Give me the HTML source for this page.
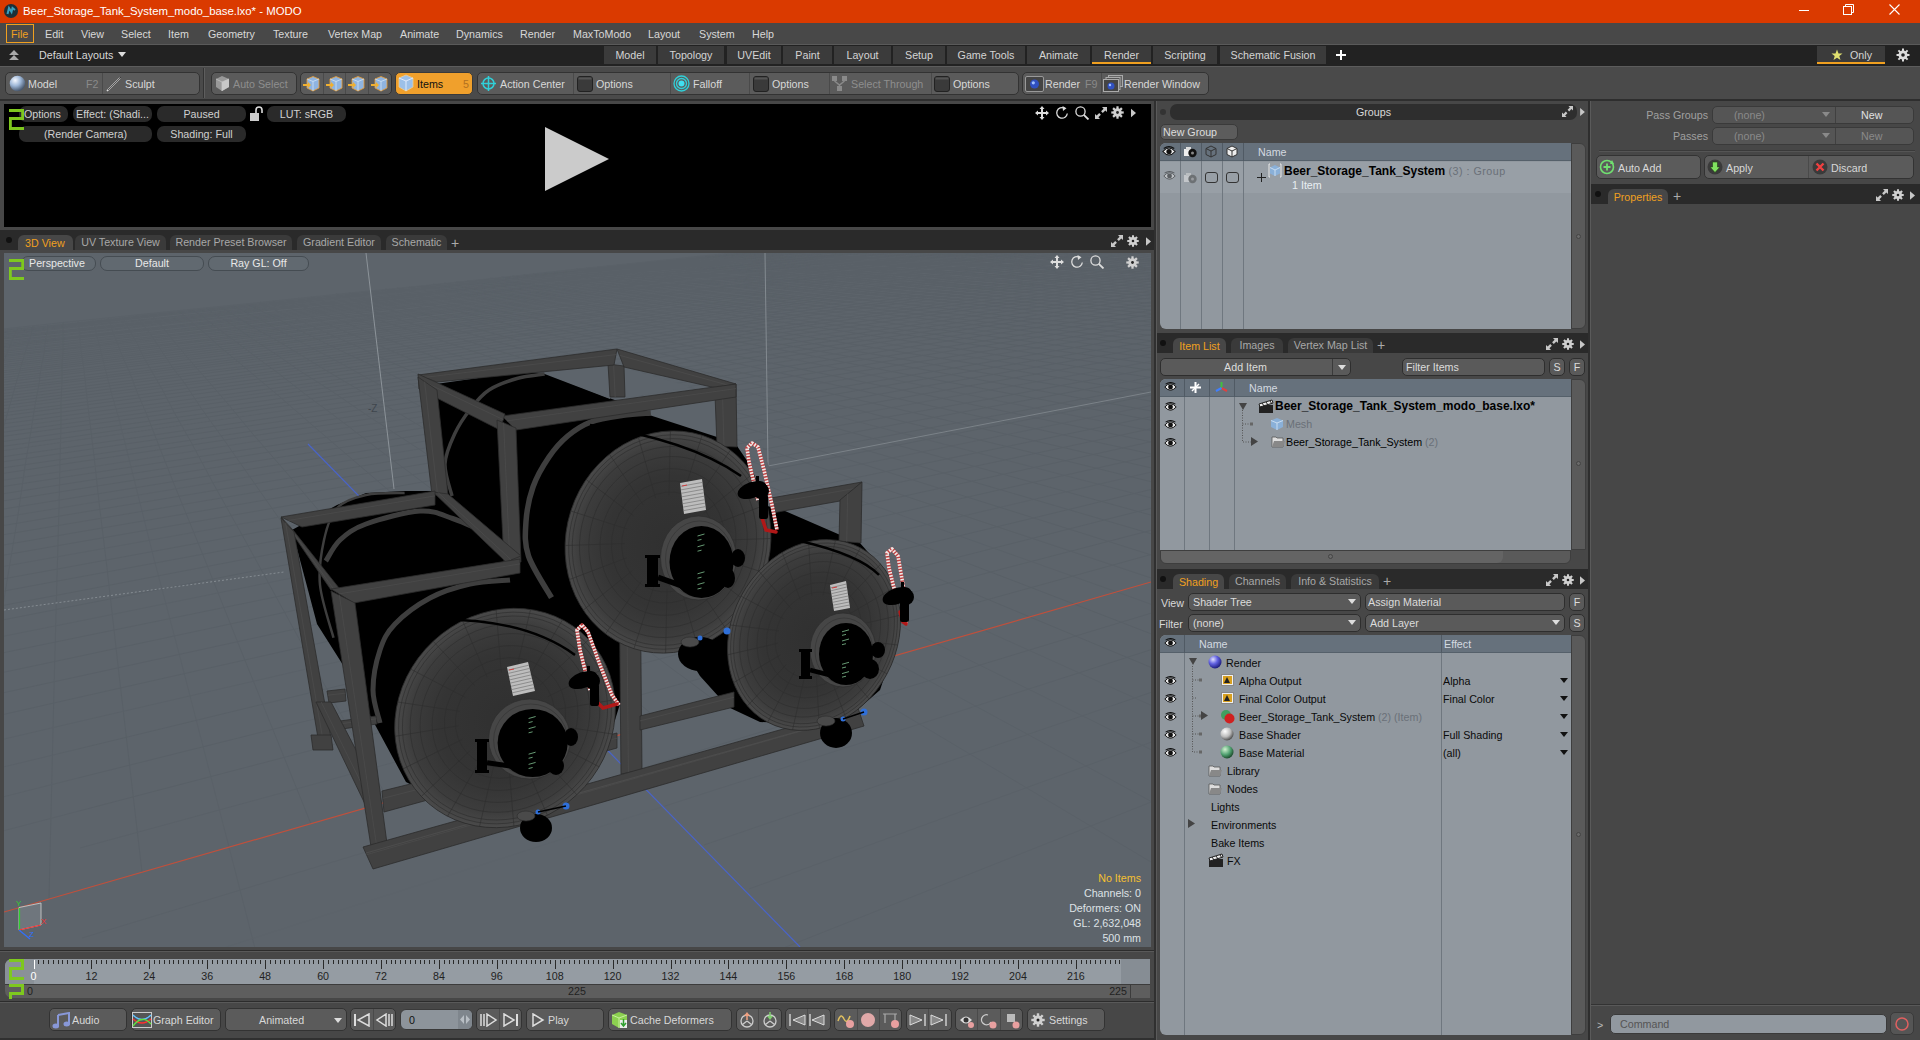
<!DOCTYPE html>
<html><head><meta charset="utf-8">
<style>
*{box-sizing:border-box;margin:0;padding:0}
html,body{width:1920px;height:1040px;overflow:hidden;background:#3a3a3a;font-family:"Liberation Sans",sans-serif;font-size:10.7px;color:#d8d8d8}
.a{position:absolute}
.t{position:absolute;white-space:nowrap;line-height:1}
.btn{position:absolute;background:#5b5b5b;border:1px solid #333;border-radius:5px}
.pill{position:absolute;background:#2a2a2a;border-radius:7px;color:#d0d0d0;text-align:center;line-height:16px;height:16px;white-space:nowrap}
.vpill{position:absolute;border:1px solid #454c52;border-radius:7px;color:#e8e8e8;text-align:center;line-height:13px;height:15px;white-space:nowrap;background:#616970}
.tab{position:absolute;background:#3b3b3b;color:#d4d4d4;text-align:center;line-height:18px;height:18px;white-space:nowrap}
.ptab{position:absolute;background:#3a3a3a;border-radius:6px 6px 0 0;color:#a8a8a8;line-height:15px;height:15px;white-space:nowrap;text-align:center}
.list{position:absolute;background:#91989f}
.hdr{position:absolute;background:#66717c;color:#d0d6dc}
.vl{position:absolute;width:1px;background:#6f777f}
.dd{position:absolute;background:#5a5a5a;border:1px solid #2e2e2e;border-radius:5px;color:#dcdcdc;line-height:15px;white-space:nowrap}
</style></head><body>
<!-- TITLE BAR -->
<div class="a" style="left:0;top:0;width:1920px;height:23px;background:#da3a00"></div>
<svg class="a" style="left:3px;top:3px" width="16" height="16"><circle cx="8" cy="8" r="7" fill="#1d3038"/><path d="M4.5 11 L6 5 L8.5 9 L9.5 5 L12 7" stroke="#3aa0c0" stroke-width="2" fill="none"/></svg>
<div class="t" style="left:23px;top:6px;font-size:11.4px;color:#fff">Beer_Storage_Tank_System_modo_base.lxo* - MODO</div>
<div class="a" style="left:1799px;top:10px;width:10px;height:1px;background:#fff"></div>
<svg class="a" style="left:1843px;top:4px" width="12" height="12"><rect x="0.5" y="2.5" width="8" height="8" fill="none" stroke="#fff"/><path d="M2.5 2.5 V0.5 H10.5 V8.5 H8.5" fill="none" stroke="#fff"/></svg>
<svg class="a" style="left:1889px;top:4px" width="12" height="12"><path d="M0.5 0.5 L10.5 10.5 M10.5 0.5 L0.5 10.5" stroke="#fff" stroke-width="1.1"/></svg>

<!-- MENU BAR -->
<div class="a" style="left:0;top:23px;width:1920px;height:22px;background:#484848;border-bottom:1px solid #5a5a5a"></div>
<div class="a" style="left:6px;top:24px;width:28px;height:19px;border:1px solid #f0a020"></div>
<div class="t" style="left:11px;top:29px;color:#f0a020">File</div>
<div class="t" style="left:45px;top:29px">Edit</div>
<div class="t" style="left:81px;top:29px">View</div>
<div class="t" style="left:121px;top:29px">Select</div>
<div class="t" style="left:168px;top:29px">Item</div>
<div class="t" style="left:208px;top:29px">Geometry</div>
<div class="t" style="left:273px;top:29px">Texture</div>
<div class="t" style="left:328px;top:29px">Vertex Map</div>
<div class="t" style="left:400px;top:29px">Animate</div>
<div class="t" style="left:456px;top:29px">Dynamics</div>
<div class="t" style="left:520px;top:29px">Render</div>
<div class="t" style="left:573px;top:29px">MaxToModo</div>
<div class="t" style="left:648px;top:29px">Layout</div>
<div class="t" style="left:699px;top:29px">System</div>
<div class="t" style="left:752px;top:29px">Help</div>

<!-- LAYOUT BAR -->
<div class="a" style="left:0;top:45px;width:1920px;height:21px;background:#222"></div>
<svg class="a" style="left:8px;top:49px" width="12" height="12"><path d="M1 6 L6 1 L11 6 Z M1 11 L6 6 L11 11 Z" fill="#aaa"/></svg>
<div class="t" style="left:39px;top:50px">Default Layouts</div>
<svg class="a" style="left:118px;top:52px" width="8" height="5"><path d="M0 0 H8 L4 5Z" fill="#ddd"/></svg>
<div class="tab" style="left:604px;top:46px;width:52px">Model</div>
<div class="tab" style="left:658px;top:46px;width:66px">Topology</div>
<div class="tab" style="left:727px;top:46px;width:54px">UVEdit</div>
<div class="tab" style="left:783px;top:46px;width:49px">Paint</div>
<div class="tab" style="left:834px;top:46px;width:57px">Layout</div>
<div class="tab" style="left:893px;top:46px;width:52px">Setup</div>
<div class="tab" style="left:947px;top:46px;width:78px">Game Tools</div>
<div class="tab" style="left:1027px;top:46px;width:63px">Animate</div>
<div class="tab" style="left:1092px;top:46px;width:59px;box-shadow:inset 0 -2px 0 #f0a020">Render</div>
<div class="tab" style="left:1153px;top:46px;width:64px">Scripting</div>
<div class="tab" style="left:1220px;top:46px;width:106px">Schematic Fusion</div>
<svg class="a" style="left:1335px;top:49px" width="12" height="12"><path d="M6 1 V11 M1 6 H11" stroke="#fff" stroke-width="2"/></svg>
<div class="tab" style="left:1817px;top:46px;width:68px;box-shadow:inset 0 -2px 0 #f0a020;text-align:left;padding-left:33px">Only</div>
<svg class="a" style="left:1831px;top:49px" width="12" height="12"><path d="M6 0.5 L7.5 4.5 L11.5 4.6 L8.3 7.1 L9.5 11 L6 8.7 L2.5 11 L3.7 7.1 L0.5 4.6 L4.5 4.5Z" fill="#e0e070"/></svg>
<svg class="a" style="left:1896px;top:48px" width="14" height="14" viewBox="0 0 14 14"><g fill="#ddd"><circle cx="7" cy="7" r="4.5"/><rect x="6" y="0.5" width="2" height="13"/><rect x="0.5" y="6" width="13" height="2"/><rect x="6" y="0.5" width="2" height="13" transform="rotate(45 7 7)"/><rect x="6" y="0.5" width="2" height="13" transform="rotate(-45 7 7)"/></g><circle cx="7" cy="7" r="1.8" fill="#222"/></svg>
<!-- TOOLBAR -->
<div class="a" style="left:0;top:66px;width:1920px;height:35px;background:#4a4a4a;border-top:1px solid #5c5c5c;border-bottom:2px solid #2e2e2e"></div>
<div class="a" style="left:203px;top:68px;width:1px;height:30px;background:#333"></div>
<div class="a" style="left:204px;top:68px;width:1px;height:30px;background:#5e5e5e"></div>
<!-- model/sculpt -->
<div class="btn" style="left:5px;top:72px;width:195px;height:23px"></div>
<div class="a" style="left:102px;top:73px;width:1px;height:21px;background:#4a4a4a"></div>
<svg class="a" style="left:9px;top:75px" width="17" height="17"><defs><radialGradient id="gs" cx="0.35" cy="0.3" r="0.7"><stop offset="0" stop-color="#f4f8ff"/><stop offset="0.5" stop-color="#9fb8d8"/><stop offset="1" stop-color="#4a5a70"/></radialGradient></defs><circle cx="8.5" cy="8.5" r="7.8" fill="url(#gs)"/></svg>
<div class="t" style="left:28px;top:79px">Model</div>
<div class="t" style="left:86px;top:79px;color:#8a8a8a">F2</div>
<svg class="a" style="left:105px;top:75px" width="18" height="18"><path d="M2 16 L15 3" stroke="#ddd" stroke-width="1.6"/><path d="M3 15 L16 2" stroke="#333" stroke-width="0.8"/></svg>
<div class="t" style="left:125px;top:79px">Sculpt</div>
<!-- auto select -->
<div class="btn" style="left:211px;top:72px;width:86px;height:23px"></div>
<svg class="a" style="left:214px;top:75px" width="17" height="17"><path d="M2 4 L8 1 L15 4 L15 12 L8 16 L2 12Z" fill="#999"/><path d="M2 4 L8 7 L15 4 M8 7 V16" stroke="#bbb" fill="none"/><path d="M8 7 L15 4 L15 12 L8 16Z" fill="#c8c8c8"/></svg>
<div class="t" style="left:233px;top:79px;color:#8e8e8e">Auto Select</div>
<!-- 4 icons -->
<div class="btn" style="left:300px;top:72px;width:92px;height:23px"></div>
<div class="a" style="left:323px;top:73px;width:1px;height:21px;background:#4a4a4a"></div>
<div class="a" style="left:345px;top:73px;width:1px;height:21px;background:#4a4a4a"></div>
<div class="a" style="left:368px;top:73px;width:1px;height:21px;background:#4a4a4a"></div>
<svg class="a" style="left:302px;top:75px" width="90" height="18">
 <g id="cb"><path d="M5 4 L11 1.5 L17 4 L17 13 L11 16 L5 13Z" fill="#8fb4e0" stroke="#f0a030" stroke-width="0.8"/><path d="M5 4 L11 6.5 L17 4 M11 6.5 V16" stroke="#d8e8f8" stroke-width="0.7" fill="none"/><path d="M1 9 H6 V7 L9 10 L6 13 V11 H1Z" fill="#f0b030"/></g>
 <use href="#cb" x="23"/><use href="#cb" x="45"/><use href="#cb" x="68"/>
</svg>
<!-- items -->
<div class="a" style="left:395px;top:72px;width:78px;height:23px;background:#f0a02c;border-radius:5px;border:1px solid #3a3a3a"></div>
<svg class="a" style="left:397px;top:74px" width="18" height="18"><path d="M2 4 L9 1 L16 4 L16 13 L9 17 L2 13Z" fill="#9cc0e8" stroke="#e8d0a0" stroke-width="0.8"/><path d="M2 4 L9 7 L16 4 M9 7 V17" stroke="#f0f4ff" stroke-width="0.8" fill="none"/></svg>
<div class="t" style="left:417px;top:79px;color:#111">Items</div>
<div class="t" style="left:463px;top:79px;color:#b07020">5</div>
<!-- action center group -->
<div class="btn" style="left:477px;top:72px;width:542px;height:23px"></div>
<div class="a" style="left:573px;top:73px;width:1px;height:21px;background:#4a4a4a"></div>
<div class="a" style="left:670px;top:73px;width:1px;height:21px;background:#4a4a4a"></div>
<div class="a" style="left:749px;top:73px;width:1px;height:21px;background:#4a4a4a"></div>
<div class="a" style="left:829px;top:73px;width:1px;height:21px;background:#4a4a4a"></div>
<div class="a" style="left:931px;top:73px;width:1px;height:21px;background:#4a4a4a"></div>
<svg class="a" style="left:480px;top:75px" width="17" height="17"><circle cx="8.5" cy="8.5" r="5.5" stroke="#30d0d8" stroke-width="1.5" fill="none"/><path d="M8.5 1 V16 M1 8.5 H16" stroke="#30d0d8" stroke-width="1.5"/></svg>
<div class="t" style="left:500px;top:79px">Action Center</div>
<svg class="a" style="left:577px;top:76px" width="16" height="16"><rect x="0.5" y="0.5" width="15" height="15" rx="2.5" fill="#3a3a3a" stroke="#222"/><rect x="1.5" y="1.5" width="13" height="2" fill="#555"/></svg>
<div class="t" style="left:596px;top:79px">Options</div>
<svg class="a" style="left:673px;top:75px" width="17" height="17"><circle cx="8.5" cy="8.5" r="7.5" stroke="#30d0d8" stroke-width="1.3" fill="none"/><circle cx="8.5" cy="8.5" r="5" stroke="#30d0d8" stroke-width="1.3" fill="none"/><circle cx="8.5" cy="8.5" r="3" fill="#40e0f0"/></svg>
<div class="t" style="left:693px;top:79px">Falloff</div>
<svg class="a" style="left:753px;top:76px" width="16" height="16"><rect x="0.5" y="0.5" width="15" height="15" rx="2.5" fill="#3a3a3a" stroke="#222"/><rect x="1.5" y="1.5" width="13" height="2" fill="#555"/></svg>
<div class="t" style="left:772px;top:79px">Options</div>
<svg class="a" style="left:831px;top:75px" width="18" height="18"><g fill="#8a8a8a"><rect x="1" y="1" width="5" height="5"/><rect x="11" y="1" width="5" height="5"/><rect x="6" y="11" width="5" height="5"/></g><path d="M3.5 6 L8.5 10 L13.5 6 M8.5 10 V11" stroke="#8a8a8a" stroke-width="1.5" fill="none"/></svg>
<div class="t" style="left:851px;top:79px;color:#8e8e8e">Select Through</div>
<svg class="a" style="left:934px;top:76px" width="16" height="16"><rect x="0.5" y="0.5" width="15" height="15" rx="2.5" fill="#3a3a3a" stroke="#222"/><rect x="1.5" y="1.5" width="13" height="2" fill="#555"/></svg>
<div class="t" style="left:953px;top:79px">Options</div>
<!-- render group -->
<div class="btn" style="left:1022px;top:72px;width:187px;height:23px"></div>
<div class="a" style="left:1101px;top:73px;width:1px;height:21px;background:#4a4a4a"></div>
<svg class="a" style="left:1025px;top:76px" width="19" height="16"><rect x="0.5" y="0.5" width="18" height="15" rx="1.5" fill="#444" stroke="#999"/><circle cx="9.5" cy="8" r="4.5" fill="#3050c0"/><circle cx="8.3" cy="6.8" r="1.6" fill="#a0c0ff"/></svg>
<div class="t" style="left:1045px;top:79px">Render</div>
<div class="t" style="left:1085px;top:79px;color:#8a8a8a">F9</div>
<svg class="a" style="left:1103px;top:75px" width="20" height="18"><rect x="5.5" y="0.5" width="14" height="11" fill="#666" stroke="#aaa"/><rect x="3" y="2.5" width="14" height="12" fill="#555" stroke="#aaa"/><rect x="0.5" y="4.5" width="15" height="12" fill="#444" stroke="#aaa"/><circle cx="8" cy="11" r="3.5" fill="#3050c0"/><circle cx="7" cy="10" r="1.2" fill="#a0c0ff"/></svg>
<div class="t" style="left:1124px;top:79px">Render Window</div>
<svg width="0" height="0" style="position:absolute">
 <defs>
  <symbol id="i-move" viewBox="0 0 14 14"><path d="M7 0 L9.5 3 H8 V6 H11 V4.5 L14 7 L11 9.5 V8 H8 V11 H9.5 L7 14 L4.5 11 H6 V8 H3 V9.5 L0 7 L3 4.5 V6 H6 V3 H4.5Z" fill="#ddd"/></symbol>
  <symbol id="i-rot" viewBox="0 0 14 14"><path d="M9.5 2.2 A5.3 5.3 0 1 0 12.3 7.5" stroke="#ddd" stroke-width="1.3" fill="none"/><path d="M7.5 0 L11.5 2.3 L8 5Z" fill="#ddd"/></symbol>
  <symbol id="i-zoom" viewBox="0 0 15 14"><circle cx="5.5" cy="5.5" r="4.6" stroke="#ddd" stroke-width="1.3" fill="none"/><path d="M8.8 8.8 L13.5 13.5" stroke="#ddd" stroke-width="1.8"/></symbol>
  <symbol id="i-max" viewBox="0 0 12 12"><path d="M7 0 H12 V5 L10.3 3.4 L7.8 5.9 L6.1 4.2 L8.6 1.7Z M5 12 H0 V7 L1.7 8.6 L4.2 6.1 L5.9 7.8 L3.4 10.3Z" fill="#c8c8c8"/></symbol>
  <symbol id="i-gear" viewBox="0 0 14 14"><g fill="#d0d0d0"><circle cx="7" cy="7" r="4.6"/><rect x="5.8" y="0.3" width="2.4" height="13.4"/><rect x="0.3" y="5.8" width="13.4" height="2.4"/><rect x="5.8" y="0.3" width="2.4" height="13.4" transform="rotate(45 7 7)"/><rect x="5.8" y="0.3" width="2.4" height="13.4" transform="rotate(-45 7 7)"/></g><circle cx="7" cy="7" r="1.5" fill="#222"/></symbol>
  <symbol id="i-arr" viewBox="0 0 6 10"><path d="M0 0 L6 5 L0 10Z" fill="#c8c8c8"/></symbol>
  <symbol id="i-two" viewBox="0 0 16 21"><g fill="#7ec81e"><rect x="0" y="0" width="16" height="3"/><rect x="13" y="0" width="3" height="11"/><rect x="0" y="8" width="16" height="3"/><rect x="0" y="8" width="3" height="13"/><rect x="0" y="18" width="16" height="3"/></g></symbol>
  <symbol id="i-eye" viewBox="0 0 16 12"><path d="M1 6 Q8 -2 15 6 Q8 14 1 6Z" fill="#eee" stroke="#111" stroke-width="1.2"/><circle cx="8" cy="6" r="3" fill="#111"/><path d="M2 2.5 Q8 -1.5 14 2.5" stroke="#111" stroke-width="1.3" fill="none"/></symbol>
 </defs>
</svg>

<!-- LEFT PANEL -->
<div class="a" style="left:0;top:101px;width:1156px;height:939px;background:#474747"></div>
<div class="a" style="left:1154px;top:101px;width:2px;height:939px;background:#303030"></div>
<!-- render preview -->
<div class="a" style="left:4px;top:104px;width:1147px;height:123px;background:#000"></div>
<div class="pill" style="left:19px;top:106px;width:49px;text-align:left;padding-left:5px">Options</div>
<div class="pill" style="left:73px;top:106px;width:79px">Effect: (Shadi...</div>
<div class="pill" style="left:157px;top:106px;width:89px">Paused</div>
<svg class="a" style="left:249px;top:106px" width="15" height="16"><rect x="1" y="7" width="9" height="8" fill="#ccc"/><path d="M7 7 V4 A3 3 0 0 1 13 4 V7" stroke="#ddd" stroke-width="1.6" fill="none"/></svg>
<div class="pill" style="left:267px;top:106px;width:79px">LUT: sRGB</div>
<div class="pill" style="left:19px;top:126px;width:133px">(Render Camera)</div>
<div class="pill" style="left:157px;top:126px;width:89px">Shading: Full</div>
<svg class="a" style="left:9px;top:109px" width="15" height="21" viewBox="0 0 16 21" preserveAspectRatio="none"><use href="#i-two"/></svg>
<svg class="a" style="left:1035px;top:106px" width="14" height="14"><use href="#i-move"/></svg>
<svg class="a" style="left:1055px;top:106px" width="14" height="14"><use href="#i-rot"/></svg>
<svg class="a" style="left:1075px;top:106px" width="15" height="14"><use href="#i-zoom"/></svg>
<svg class="a" style="left:1095px;top:107px" width="12" height="12"><use href="#i-max"/></svg>
<svg class="a" style="left:1111px;top:106px" width="13" height="13"><use href="#i-gear"/></svg>
<svg class="a" style="left:1131px;top:108px" width="5" height="10"><use href="#i-arr"/></svg>
<!-- play triangle -->
<svg class="a" style="left:544px;top:126px" width="66" height="66"><path d="M1 1 L65 33 L1 65Z" fill="#cbcbcb"/></svg>

<!-- tab strip -->
<div class="a" style="left:0;top:230px;width:1154px;height:20px;background:#2a2a2a"></div>
<div class="a" style="left:6px;top:237px;width:6px;height:6px;border-radius:50%;background:#111"></div>
<div class="a" style="left:18px;top:235px;width:55px;height:15px;background:#474747;border-radius:6px 6px 0 0"></div>
<div class="t" style="left:25px;top:238px;color:#f0a020">3D View</div>
<div class="ptab" style="left:75px;top:235px;width:91px">UV Texture View</div>
<div class="ptab" style="left:170px;top:235px;width:122px">Render Preset Browser</div>
<div class="ptab" style="left:297px;top:235px;width:84px">Gradient Editor</div>
<div class="ptab" style="left:386px;top:235px;width:61px">Schematic</div>
<div class="t" style="left:451px;top:236px;color:#aaa;font-size:14px">+</div>
<svg class="a" style="left:1111px;top:235px" width="12" height="12"><use href="#i-max"/></svg>
<svg class="a" style="left:1127px;top:235px" width="12" height="12"><use href="#i-gear"/></svg>
<svg class="a" style="left:1146px;top:237px" width="5" height="9"><use href="#i-arr"/></svg>

<!-- viewport -->
<div id="vp" class="a" style="left:4px;top:253px;width:1147px;height:694px;background:#5d646b;overflow:hidden"></div>

<div class="timeline-placeholder"></div>
<svg class="a" style="left:4px;top:253px" width="1147" height="694" viewBox="4 253 1147 694">
<defs>
<radialGradient id="dome" cx="0.5" cy="0.5" r="0.5"><stop offset="0" stop-color="#303030"/><stop offset="0.6" stop-color="#343434"/><stop offset="0.85" stop-color="#3c3c3c"/><stop offset="1" stop-color="#4a4a4a"/></radialGradient>
</defs>
<polyline points="-265,989 -156,735 -101,606 -68,529 -46,477 -30,440 -18,412 -9,390 -1,373 5,358 10,346 14,336 18,328" fill="none" stroke="#5a6168"/>
<polyline points="-83,719 -47,596 -25,522 -10,472 1,436 9,408 15,387 20,370 24,356 28,344 31,335 33,326" fill="none" stroke="#596067"/>
<polyline points="-13,703 6,587 18,515 25,466 31,431 35,405 39,384 41,368 44,354 45,343 47,333 48,325" fill="none" stroke="#596067"/>
<polyline points="49,899 54,688 57,577 59,508 60,461 61,427 61,402 62,381 62,365 63,352 63,341 63,331 63,323" fill="none" stroke="#596067"/>
<polyline points="142,872 119,674 107,568 99,502 94,456 90,423 87,398 85,379 83,363 81,350 80,339 79,329 78,321" fill="none" stroke="#596067"/>
<polyline points="346,1303 229,847 181,661 154,559 138,495 127,451 119,419 112,395 107,376 103,360 100,348 97,337 95,328 93,320" fill="none" stroke="#5a6168"/>
<polyline points="88,1222 801,941 1247,764 1553,643 1776,555" fill="none" stroke="#5a6168"/>
<polyline points="311,824 240,648 201,550 176,489 159,446 147,415 137,392 130,373 123,358 118,345 114,335 111,326 108,318" fill="none" stroke="#596067"/>
<polyline points="749,889 1179,732" fill="none" stroke="#5a6168"/>
<polyline points="389,801 297,635 246,542 213,483 191,442 174,412 162,389 151,370 143,356 137,343 131,333 126,324 122,317" fill="none" stroke="#596067"/>
<polyline points="704,845 1117,704" fill="none" stroke="#5a6168"/>
<polyline points="1117,704 1413,603 1635,527" fill="none" stroke="#596067"/>
<polyline points="462,780 352,623 290,534 250,477 222,437 201,408 186,385 173,368 163,353 155,341 148,331 142,323 136,315" fill="none" stroke="#596067"/>
<polyline points="83,993 665,806" fill="none" stroke="#5c636a"/>
<polyline points="665,806 1063,678" fill="none" stroke="#5a6168"/>
<polyline points="1063,678 1352,585 1573,515 1746,459" fill="none" stroke="#596067"/>
<polyline points="532,760 405,611 332,526 285,471 252,433 228,404 209,382 194,365 182,351 172,339 164,329 157,321 151,314" fill="none" stroke="#596067"/>
<polyline points="82,938 630,772" fill="none" stroke="#5a6168"/>
<polyline points="630,772 1013,655 1297,569 1515,503 1688,451" fill="none" stroke="#596067"/>
<polyline points="662,723 505,589 413,511 353,460 311,424 280,397 255,376 236,360 220,347 207,335 196,326 187,318 179,311" fill="none" stroke="#596067"/>
<polyline points="80,848 571,714" fill="none" stroke="#5a6168"/>
<polyline points="571,714 928,616 1200,541 1413,483 1585,436 1726,397" fill="none" stroke="#596067"/>
<polyline points="722,706 552,579 452,504 386,455 340,420 305,394 278,373 256,357 239,344 224,333 212,324 202,316 192,310" fill="none" stroke="#596067"/>
<polyline points="-588,986 79,811" fill="none" stroke="#5a6168"/>
<polyline points="79,811 546,689 891,598 1156,529 1367,474 1538,429 1679,392 1799,361" fill="none" stroke="#596067"/>
<polyline points="779,689 598,568 490,497 419,449 368,416 330,390 300,371 277,355 257,342 241,331 228,322 216,315 206,308" fill="none" stroke="#596067"/>
<polyline points="-545,935 78,778" fill="none" stroke="#5a6168"/>
<polyline points="78,778 523,667 857,583 1116,517 1324,465 1493,423 1635,387 1755,357" fill="none" stroke="#596067"/>
<polyline points="1218,902 834,673" fill="none" stroke="#5a6168"/>
<polyline points="834,673 642,559 527,490 450,444 395,411 354,387 322,368 296,352 276,340 258,330 243,321 231,313 220,307" fill="none" stroke="#596067"/>
<polyline points="-507,890 78,749" fill="none" stroke="#5a6168"/>
<polyline points="78,749 503,646 826,568 1079,507 1284,457 1452,417 1593,382 1713,354" fill="none" stroke="#596067"/>
<polyline points="1283,873 887,658 685,549 563,483 481,439 422,407 378,384 344,365 316,350 293,338 275,328 259,319 245,312 233,305" fill="none" stroke="#5a6168"/>
<polyline points="-474,851 77,722 484,628 797,555 1044,497 1246,450 1413,411 1553,378 1673,350 1776,326" fill="none" stroke="#5a6168"/>
<polyline points="1344,845 937,644" fill="none" stroke="#5a6168"/>
<polyline points="937,644 726,540 598,477 511,434 449,403 402,380 365,362 335,348 311,336 291,326 274,317 259,310 246,304" fill="none" stroke="#596067"/>
<polyline points="-444,816 76,698 467,610 770,542 1012,487 1210,443 1376,405 1515,374 1635,347 1739,324" fill="none" stroke="#596067"/>
<polyline points="1401,818 984,630" fill="none" stroke="#5a6168"/>
<polyline points="984,630 766,531 632,471 540,429 475,400 425,377 386,360 354,345 329,334 307,324 289,316 273,309 260,302" fill="none" stroke="#596067"/>
<polyline points="-417,784 76,677 451,595 745,531 982,479 1177,436 1340,400 1479,370 1599,344 1703,321 1794,301" fill="none" stroke="#596067"/>
<polyline points="1455,794 1030,617 805,523 665,464 569,425 500,396 448,374 406,357 373,343 346,332 323,322 304,314 287,307 273,301" fill="none" stroke="#596067"/>
<polyline points="-393,756 76,657 436,580 722,520 953,471 1145,430 1307,396 1445,366 1564,341 1668,319 1760,300" fill="none" stroke="#596067"/>
<polyline points="1505,771 1074,604 842,515 697,458 597,420 525,392 470,371 427,354 392,341 363,330 339,320 319,312 301,306 286,300" fill="none" stroke="#596067"/>
<polyline points="-372,730 75,638 422,567 700,510 927,463 1116,424 1276,391 1413,363 1531,338 1635,317 1727,298" fill="none" stroke="#596067"/>
<polyline points="1553,749 1117,592 878,507 728,453 625,416 549,389 492,368 447,352 410,339 380,328 355,319 333,311 315,304 298,298" fill="none" stroke="#5a6168"/>
<polyline points="-352,707 75,622 410,554 680,500 902,456 1088,418 1246,387 1381,359 1500,336 1603,315 1695,296 1777,280" fill="none" stroke="#5a6168"/>
<polyline points="1598,728 1157,580 914,499 759,447 652,411 574,385 514,365 466,349 428,336 397,326 370,317 348,309 328,303 311,297" fill="none" stroke="#596067"/>
<polyline points="-334,686 74,606 398,543 660,491 878,449 1061,413 1217,382 1352,356 1469,333 1573,313 1664,295 1746,279" fill="none" stroke="#596067"/>
<polyline points="1641,708 1196,569 948,491 789,441 678,407 597,381 535,362 486,347 446,334 413,324 385,315 362,308 342,301 324,296" fill="none" stroke="#596067"/>
<polyline points="-317,666 74,592 387,532 643,483 855,442 1036,408 1190,378 1323,353 1440,331 1543,311 1635,293 1717,278 1791,264" fill="none" stroke="#596067"/>
<polyline points="1681,690 1234,558 981,484 818,436 704,403 620,378 556,359 505,344 464,332 429,322 401,313 376,306 355,300 336,294" fill="none" stroke="#596067"/>
<polyline points="-302,648 74,578 377,522 626,475 834,436 1011,403 1164,375 1296,350 1412,328 1515,309 1607,292 1689,277 1763,263" fill="none" stroke="#596067"/>
<polyline points="1719,672 1270,548 1013,477 846,431 730,398 643,375 577,356 524,342 481,330 446,320 416,312 390,305 368,299 349,293" fill="none" stroke="#596067"/>
<polyline points="-288,632 74,566 367,512 610,468 814,430 989,399 1139,371 1270,347 1386,326 1488,307 1579,291 1661,276 1736,262" fill="none" stroke="#596067"/>
<polyline points="1756,655 1305,538 1044,470 874,426 754,394 666,371 597,353 543,339 498,328 461,318 430,310 404,303 381,297 361,292" fill="none" stroke="#5a6168"/>
<polyline points="-275,616 73,554 358,503 595,461 795,425 967,394 1115,368 1245,344 1360,324 1462,306 1553,289 1635,275 1709,261 1777,249" fill="none" stroke="#5a6168"/>
<polyline points="1790,639 1339,528 1075,463 901,421 779,390 688,368 617,351 561,337 515,326 477,316 445,308 418,302 394,296 373,291" fill="none" stroke="#596067"/>
<polyline points="-263,602 73,543 349,495 581,454 777,420 946,390 1093,364 1221,342 1335,322 1437,304 1528,288 1610,274 1684,261 1751,249" fill="none" stroke="#596067"/>
<polyline points="1371,519 1104,457 928,416 803,387 709,365 637,348 579,334 532,324 493,314 460,307 431,300 407,294 385,289" fill="none" stroke="#596067"/>
<polyline points="-251,589 73,533 341,487 567,448 760,415 926,386 1071,361 1199,339 1312,320 1412,302 1503,287 1585,273 1659,260 1727,248 1789,238" fill="none" stroke="#596067"/>
<polyline points="1403,510 1133,450 954,411 826,383 730,362 656,345 597,332 549,321 508,313 474,305 445,299 419,293 397,288" fill="none" stroke="#596067"/>
<polyline points="-241,576 73,523 334,479 554,442 743,410 907,382 1050,358 1176,337 1289,318 1389,301 1479,286 1561,272 1635,259 1703,248 1765,237" fill="none" stroke="#596067"/>
<polyline points="1433,501 1161,444 979,406 849,379 751,359 675,343 615,330 565,319 523,311 488,303 458,297 432,292 409,287" fill="none" stroke="#596067"/>
<polyline points="-600,626 -231,565 72,514 326,472 542,436 728,406 889,379 1030,355 1155,334 1267,316 1366,299 1456,284 1538,271 1612,259 1680,247 1742,237" fill="none" stroke="#596067"/>
<polyline points="1462,493 1188,438 1004,402 871,375 772,355 694,340 632,328 581,317 538,309 502,302 471,296 444,290 421,286" fill="none" stroke="#5a6168"/>
<polyline points="-577,612 -222,554 72,506 320,465 531,431 713,401 871,375 1011,352 1135,332 1245,314 1344,298 1434,283 1515,270 1589,258 1657,247 1719,237" fill="none" stroke="#5a6168"/>
<polyline points="1490,485 1214,432 1028,397 894,372 792,352 713,337 649,325 597,316 553,307 516,300 484,294 457,289 433,284" fill="none" stroke="#596067"/>
<polyline points="-556,599 -213,544 72,498 313,459 520,426 698,397 855,372 993,350 1115,330 1225,312 1323,297 1412,282 1493,269 1567,257 1635,246 1697,236" fill="none" stroke="#596067"/>
<polyline points="1518,477 1240,427 1052,393 915,368 812,350 731,335 666,323 613,314 568,306 530,299 497,293 469,288 444,283" fill="none" stroke="#596067"/>
<polyline points="-536,586 -205,534 72,490 307,453 509,421 685,393 839,369 975,347 1096,328 1205,311 1303,295 1392,281 1472,268 1546,257 1614,246 1676,236" fill="none" stroke="#596067"/>
<polyline points="1544,469 1265,421 1075,388 936,365 832,347 749,332 683,321 628,312 582,304 544,297 510,291 481,286 456,282" fill="none" stroke="#596067"/>
<polyline points="-517,575 -197,525 72,483 301,447 499,416 672,389 823,366 958,345 1078,326 1186,309 1283,294 1371,280 1452,268 1525,256 1593,246 1655,236" fill="none" stroke="#596067"/>
<polyline points="1570,462 1290,416 1097,384 957,361 851,344 767,330 699,319 644,310 597,302 557,296 523,290 493,285 467,281" fill="none" stroke="#596067"/>
<polyline points="-499,564 -190,516 72,476 296,442 490,412 659,386 809,363 941,342 1060,324 1167,308 1264,293 1352,279 1432,267 1505,256 1573,245 1635,236" fill="none" stroke="#596067"/>
<polyline points="1595,455 1313,411 1120,380 978,358 870,341 784,328 716,317 659,308 611,300 570,294 536,289 505,284 478,280" fill="none" stroke="#5a6168"/>
<polyline points="-483,554 -183,508 72,470 290,436 480,408 647,382 794,360 926,340 1043,322 1149,306 1245,292 1333,278 1412,266 1486,255 1553,245 1615,235" fill="none" stroke="#5a6168"/>
<polyline points="1619,448 1337,405 1141,376 998,355 888,338 802,325 732,315 674,306 625,299 584,293 548,287 517,283 490,278" fill="none" stroke="#596067"/>
<polyline points="-467,544 -176,501 71,463 285,431 472,404 635,379 781,357 910,338 1027,320 1132,305 1227,290 1314,277 1394,265 1467,255 1534,244 1596,235" fill="none" stroke="#596067"/>
<polyline points="1643,441 1359,400 1162,372 1018,351 907,335 819,323 747,313 689,304 639,297 597,291 560,286 529,281 501,277" fill="none" stroke="#596067"/>
<polyline points="-452,535 -170,493 71,458 280,427 463,400 624,376 768,355 896,336 1011,319 1115,303 1210,289 1296,276 1375,265 1448,254 1515,244 1577,235" fill="none" stroke="#596067"/>
<polyline points="1665,434 1382,396 1183,368 1037,348 925,333 835,321 763,311 703,302 653,296 610,290 573,285 540,280 512,276" fill="none" stroke="#596067"/>
<polyline points="-438,526 -164,486 71,452 276,422 455,396 614,373 755,352 881,334 995,317 1099,302 1193,288 1279,276 1357,264 1430,253 1497,244 1559,235" fill="none" stroke="#596067"/>
<polyline points="1687,428 1403,391 1204,365 1056,345 942,330 852,318 779,309 718,301 666,294 623,288 585,283 552,279 523,275" fill="none" stroke="#596067"/>
<polyline points="-425,518 -159,480 71,447 271,418 447,392 603,370 743,350 868,332 980,315 1083,301 1176,287 1262,275 1340,263 1412,253 1479,243 1541,234" fill="none" stroke="#596067"/>
<polyline points="1709,422 1424,386 1224,361 1075,342 960,328 868,316 794,307 732,299 680,292 635,287 597,282 563,278 533,274" fill="none" stroke="#5a6168"/>
<polyline points="-413,510 -153,473 71,441 267,413 440,389 593,367 731,347 854,330 966,314 1068,299 1160,286 1245,274 1323,263 1395,252 1462,243 1524,234" fill="none" stroke="#5a6168"/>
<polyline points="1730,416 1445,382 1243,357 1093,339 977,325 884,314 809,305 746,297 693,291 648,285 609,281 574,276 544,273" fill="none" stroke="#596067"/>
<polyline points="-401,503 -148,467 71,437 263,409 433,385 584,364 719,345 841,328 952,312 1053,298 1145,285 1229,273 1307,262 1378,252 1445,243 1507,234" fill="none" stroke="#596067"/>
<polyline points="1750,410 1465,377 1262,354 1111,336 994,323 900,312 824,303 760,295 706,289 660,284 620,279 586,275 555,272" fill="none" stroke="#596067"/>
<polyline points="-389,496 -143,462 71,432 259,406 426,382 575,361 708,343 829,326 939,311 1038,297 1130,284 1213,272 1291,262 1362,252 1428,242 1490,234" fill="none" stroke="#596067"/>
<polyline points="1770,404 1485,373 1281,350 1129,333 1011,320 916,310 838,301 774,294 719,288 673,282 632,278 597,274 565,271" fill="none" stroke="#596067"/>
<polyline points="-378,489 -139,456 71,427 255,402 419,379 566,359 698,341 817,324 925,309 1024,296 1115,283 1198,272 1275,261 1346,251 1412,242 1474,233" fill="none" stroke="#596067"/>
<polyline points="1789,399 1504,369 1300,347 1146,330 1027,318 931,307 853,299 788,292 732,286 685,281 644,277 608,273 576,269" fill="none" stroke="#596067"/>
<polyline points="-368,483 -134,451 71,423 252,398 413,376 557,356 687,339 805,323 913,308 1011,294 1101,282 1183,271 1260,260 1331,251 1397,242 1458,233" fill="none" stroke="#596067"/>
<polyline points="1523,364 1318,343 1164,328 1043,315 947,305 867,297 801,290 745,285 697,280 655,275 619,272 586,268" fill="none" stroke="#5a6168"/>
<polyline points="-358,477 -130,446 70,419 248,395 407,373 549,354 677,337 794,321 900,307 997,293 1087,281 1169,270 1245,260 1316,250 1381,241 1442,233" fill="none" stroke="#5a6168"/>
<polyline points="1541,360 1336,340 1180,325 1059,313 962,303 881,295 815,289 758,283 709,278 667,274 629,271 597,267" fill="none" stroke="#596067"/>
<polyline points="-349,471 -126,441 70,415 245,392 401,371 541,352 668,335 783,319 888,305 985,292 1073,280 1155,269 1231,259 1301,250 1366,241 1427,233" fill="none" stroke="#596067"/>
<polyline points="1559,356 1353,337 1197,322 1075,310 976,301 895,294 828,287 770,282 721,277 678,273 640,269 607,266" fill="none" stroke="#596067"/>
<polyline points="-588,499 -340,466 -122,437 70,411 242,388 395,368 533,350 658,333 772,318 876,304 972,291 1060,280 1141,269 1216,259 1286,249 1351,241 1412,233" fill="none" stroke="#596067"/>
<polyline points="1577,352 1370,334 1213,319 1090,308 991,299 909,292 841,286 783,280 733,276 689,272 651,268 617,265" fill="none" stroke="#596067"/>
<polyline points="-573,492 -331,460 -118,432 70,407 238,385 389,365 526,347 649,331 762,316 865,303 960,290 1047,279 1128,268 1203,258 1272,249 1337,240 1398,232" fill="none" stroke="#596067"/>
<polyline points="1594,349 1387,331 1229,317 1106,306 1005,297 923,290 854,284 795,279 744,274 700,270 661,267 627,264" fill="none" stroke="#596067"/>
<polyline points="-559,486 -323,455 -115,428 70,404 235,382 384,363 518,345 641,329 752,315 854,301 948,289 1035,278 1115,267 1189,258 1258,249 1323,240 1384,232" fill="none" stroke="#596067"/>
<polyline points="1611,345 1403,327 1245,314 1121,304 1020,295 936,288 867,282 807,277 756,273 711,269 672,266 637,263" fill="none" stroke="#5a6168"/>
<polyline points="-546,480 -315,450 -111,424 70,400 232,379 379,360 511,343 632,328 742,313 843,300 936,288 1022,277 1102,267 1176,257 1245,248 1309,240 1370,232" fill="none" stroke="#5a6168"/>
<polyline points="1627,341 1420,324 1261,312 1135,302 1034,293 950,286 879,281 819,276 767,272 722,268 682,265 647,262" fill="none" stroke="#596067"/>
<polyline points="-533,474 -307,446 -108,420 70,397 230,377 374,358 505,341 624,326 733,312 833,299 925,287 1010,276 1090,266 1163,257 1232,248 1296,240 1356,232" fill="none" stroke="#596067"/>
<polyline points="1643,338 1436,322 1276,309 1150,299 1048,291 963,285 892,279 831,275 778,270 733,267 693,264 657,261" fill="none" stroke="#596067"/>
<polyline points="-520,469 -300,441 -105,416 70,394 227,374 369,356 498,339 616,324 724,311 823,298 914,286 999,276 1077,266 1151,256 1219,248 1283,239 1343,232" fill="none" stroke="#596067"/>
<polyline points="1659,334 1451,319 1291,307 1164,297 1061,289 976,283 904,278 843,273 790,269 743,266 703,263 667,260" fill="none" stroke="#596067"/>
<polyline points="-508,464 -293,437 -102,413 70,391 224,371 364,354 492,338 608,323 715,309 813,297 904,285 988,275 1066,265 1138,256 1206,247 1270,239 1330,232" fill="none" stroke="#596067"/>
<polyline points="1675,331 1466,316 1306,304 1179,295 1075,288 989,281 916,276 854,272 801,268 754,265 713,262 676,259" fill="none" stroke="#596067"/>
<polyline points="-497,459 -286,433 -99,409 70,388 222,369 360,352 485,336 600,321 706,308 803,296 893,285 977,274 1054,264 1126,255 1194,247 1257,239 1317,231" fill="none" stroke="#596067"/>
<polyline points="1690,327 1482,313 1321,302 1193,293 1088,286 1002,280 928,275 866,270 812,267 765,263 723,260 686,258" fill="none" stroke="#5a6168"/>
<polyline points="-486,454 -280,429 -96,406 70,385 219,366 355,349 479,334 593,320 697,307 794,295 883,284 966,273 1043,264 1115,255 1182,246 1245,239 1304,231" fill="none" stroke="#5a6168"/>
<polyline points="1705,324 1496,310 1335,300 1206,291 1101,284 1014,278 940,273 877,269 823,265 775,262 733,259 696,257" fill="none" stroke="#596067"/>
<polyline points="-475,450 -274,425 -93,402 70,382 217,364 351,347 473,332 586,318 689,306 785,294 873,283 955,273 1032,263 1103,254 1170,246 1233,238 1292,231" fill="none" stroke="#596067"/>
<polyline points="1719,321 1511,308 1349,297 1220,289 1114,282 1027,277 952,272 889,268 834,264 785,261 743,258 705,256" fill="none" stroke="#596067"/>
<polyline points="-465,445 -267,421 -90,399 70,380 215,362 347,345 468,331 579,317 681,304 776,293 863,282 945,272 1021,263 1092,254 1159,246 1221,238 1280,231" fill="none" stroke="#596067"/>
<polyline points="1734,318 1525,305 1363,295 1233,287 1127,280 1039,275 964,270 900,266 844,263 796,260 753,257 715,255" fill="none" stroke="#596067"/>
<polyline points="-455,441 -262,417 -88,396 70,377 212,360 343,344 462,329 572,316 673,303 767,292 854,281 935,271 1010,262 1081,254 1147,245 1209,238 1268,231" fill="none" stroke="#596067"/>
<polyline points="1748,315 1539,302 1377,293 1247,285 1140,279 1051,273 976,269 911,265 855,262 806,259 762,256 724,254" fill="none" stroke="#596067"/>
<polyline points="-446,437 -256,414 -85,393 69,374 210,357 339,342 457,327 565,314 665,302 758,291 845,280 925,271 1000,262 1070,253 1136,245 1198,238 1256,231" fill="none" stroke="#596067"/>
<polyline points="1761,312 1553,300 1390,290 1260,283 1152,277 1063,272 987,267 922,264 865,261 816,258 772,255 733,253" fill="none" stroke="#5a6168"/>
<polyline points="-436,433 -251,410 -83,390 69,372 208,355 335,340 451,326 559,313 658,301 750,290 836,280 915,270 990,261 1060,253 1125,245 1187,237 1245,230" fill="none" stroke="#5a6168"/>
<polyline points="1775,309 1567,297 1404,288 1273,281 1165,275 1075,270 998,266 933,263 876,259 826,257 782,254 742,252" fill="none" stroke="#596067"/>
<polyline points="-428,429 -245,407 -80,387 69,370 206,353 331,338 446,325 552,312 651,300 742,289 827,279 906,270 980,261 1049,252 1115,245 1176,237 1234,230" fill="none" stroke="#596067"/>
<polyline points="1788,306 1580,295 1417,286 1285,279 1177,274 1087,269 1010,265 944,261 886,258 836,256 791,253 751,251" fill="none" stroke="#596067"/>
<polyline points="-419,425 -240,404 -78,385 69,367 204,351 328,337 441,323 546,311 644,299 734,288 818,278 897,269 970,260 1039,252 1104,244 1165,237 1223,230" fill="none" stroke="#596067"/>
<polyline points="1593,292 1430,284 1298,277 1189,272 1098,267 1021,263 954,260 896,257 846,254 801,252 761,250" fill="none" stroke="#596067"/>
<polyline points="-411,422 -235,401 -76,382 69,365 202,349 324,335 436,322 540,309 637,298 726,287 810,278 888,268 961,260 1029,252 1094,244 1155,237 1212,230" fill="none" stroke="#596067"/>
<polyline points="1606,290 1442,282 1310,276 1201,270 1110,266 1032,262 965,259 906,256 855,253 810,251 770,249" fill="none" stroke="#596067"/>
<polyline points="-594,441 -403,418 -230,398 -74,380 69,363 200,347 321,333 432,320 535,308 630,297 719,287 802,277 879,268 952,259 1020,251 1084,244 1144,237 1201,230" fill="none" stroke="#596067"/>
<polyline points="1619,288 1455,280 1322,274 1213,269 1121,264 1043,261 975,257 917,255 865,252 819,250 778,248" fill="none" stroke="#5a6168"/>
<polyline points="-583,437 -395,415 -226,395 -72,377 69,361 198,346 317,332 427,319 529,307 623,296 711,286 794,276 870,267 943,259 1010,251 1074,243 1134,236 1191,230" fill="none" stroke="#5a6168"/>
<polyline points="1631,285 1467,278 1335,272 1225,267 1132,263 1054,259 986,256 927,254 875,251 828,249 787,247" fill="none" stroke="#596067"/>
<polyline points="-572,433 -388,412 -221,392 -70,375 69,359 197,344 314,330 423,318 523,306 617,295 704,285 786,276 862,267 934,258 1001,251 1064,243 1124,236 1181,230" fill="none" stroke="#596067"/>
<polyline points="1644,283 1480,276 1346,270 1236,265 1143,261 1064,258 996,255 936,252 884,250 838,248 796,246" fill="none" stroke="#596067"/>
<polyline points="-561,429 -381,409 -217,390 -68,373 69,357 195,342 311,329 418,316 518,305 611,294 697,284 778,275 854,266 925,258 992,250 1055,243 1115,236 1171,230" fill="none" stroke="#596067"/>
<polyline points="1656,281 1492,274 1358,268 1248,264 1154,260 1075,257 1006,254 946,251 893,249 847,247 805,246" fill="none" stroke="#596067"/>
<polyline points="-551,426 -374,406 -213,387 -66,370 69,355 193,341 308,327 414,315 513,304 604,293 690,283 770,274 846,266 916,257 983,250 1046,243 1105,236 1161,229" fill="none" stroke="#596067"/>
<polyline points="1668,278 1504,272 1370,267 1259,262 1165,259 1085,255 1016,253 956,250 903,248 856,246 814,245" fill="none" stroke="#596067"/>
<polyline points="-541,423 -367,403 -209,385 -64,368 69,353 191,339 305,326 410,314 507,303 598,292 683,283 763,274 838,265 908,257 974,250 1037,242 1096,236 1151,229" fill="none" stroke="#596067"/>
<polyline points="1680,276 1515,270 1381,265 1270,261 1176,257 1096,254 1026,251 966,249 912,247 865,245 822,244" fill="none" stroke="#5a6168"/>
<polyline points="-531,419 -360,400 -205,382 -62,366 69,351 190,337 302,325 406,313 502,302 592,292 677,282 756,273 830,265 900,257 966,249 1028,242 1086,235 1142,229" fill="none" stroke="#5a6168"/>
<polyline points="1691,274 1527,268 1393,263 1281,259 1187,256 1106,253 1036,250 975,248 921,246 873,244 831,243" fill="none" stroke="#596067"/>
<polyline points="-522,416 -354,397 -201,380 -60,364 69,349 188,336 299,323 402,312 497,301 587,291 670,281 749,272 822,264 892,256 957,249 1019,242 1077,235 1133,229" fill="none" stroke="#596067"/>
<polyline points="1703,272 1538,266 1404,262 1292,258 1197,254 1116,252 1046,249 985,247 930,245 882,243 839,242" fill="none" stroke="#596067"/>
<polyline points="-513,413 -348,394 -197,377 -59,362 69,348 187,334 296,322 398,311 493,300 581,290 664,281 742,272 815,264 884,256 949,249 1010,242 1068,235 1124,229" fill="none" stroke="#596067"/>
<polyline points="1714,270 1549,264 1415,260 1303,256 1208,253 1126,250 1056,248 994,246 939,244 891,243 848,241" fill="none" stroke="#596067"/>
<polyline points="-504,410 -342,392 -193,375 -57,360 69,346 185,333 293,321 394,309 488,299 576,289 658,280 735,271 808,263 876,255 941,248 1002,241 1060,235 1115,229" fill="none" stroke="#596067"/>
<polyline points="1725,268 1560,263 1426,258 1313,255 1218,252 1136,249 1065,247 1003,245 948,243 900,242 856,240" fill="none" stroke="#596067"/>
<polyline points="-495,407 -336,389 -190,373 -55,358 69,344 184,331 291,319 390,308 483,298 570,288 652,279 728,271 800,263 868,255 933,248 993,241 1051,235 1106,229" fill="none" stroke="#596067"/>
<polyline points="1736,266 1571,261 1436,257 1324,253 1228,250 1146,248 1075,246 1012,244 957,242 908,241 864,239" fill="none" stroke="#5a6168"/>
<polyline points="-487,404 -330,387 -186,371 -54,356 69,343 182,330 288,318 387,307 479,297 565,288 646,279 722,270 793,262 861,255 925,248 985,241 1043,235 1097,229" fill="none" stroke="#5a6168"/>
<polyline points="1746,264 1582,259 1447,255 1334,252 1238,249 1156,247 1084,245 1022,243 966,241 917,240 872,238" fill="none" stroke="#596067"/>
<polyline points="-479,402 -325,384 -183,369 -52,354 69,341 181,329 286,317 383,306 474,296 560,287 640,278 715,270 786,262 854,254 917,247 977,241 1034,234 1088,228" fill="none" stroke="#596067"/>
<polyline points="1757,262 1593,257 1458,254 1344,250 1248,248 1166,246 1094,244 1031,242 975,240 925,239 881,238" fill="none" stroke="#596067"/>
<polyline points="-471,399 -320,382 -180,367 -51,353 69,339 180,327 283,316 380,305 470,295 555,286 634,277 709,269 780,261 846,254 910,247 969,240 1026,234 1080,228" fill="none" stroke="#596067"/>
<polyline points="1767,260 1603,256 1468,252 1355,249 1258,247 1175,244 1103,242 1040,241 984,239 934,238 889,237" fill="none" stroke="#596067"/>
<polyline points="-464,396 -314,380 -177,365 -49,351 69,338 178,326 281,315 376,304 466,295 550,285 629,277 703,269 773,261 839,254 902,247 962,240 1018,234 1072,228" fill="none" stroke="#596067"/>
<polyline points="1778,258 1614,254 1478,251 1365,248 1268,245 1185,243 1112,241 1049,240 992,238 942,237 897,236" fill="none" stroke="#596067"/>
<polyline points="-456,394 -309,378 -174,363 -48,349 69,337 177,325 278,314 373,303 462,294 545,285 623,276 697,268 767,260 832,253 895,246 954,240 1010,234 1064,228" fill="none" stroke="#596067"/>
<polyline points="1788,256 1624,252 1488,249 1375,246 1278,244 1194,242 1121,240 1057,239 1001,237 950,236 905,235" fill="none" stroke="#5a6168"/>
<polyline points="-449,391 -304,376 -171,361 -47,348 69,335 176,323 276,313 370,302 457,293 540,284 618,276 691,268 760,260 826,253 888,246 946,240 1002,234 1056,228" fill="none" stroke="#5a6168"/>
<polyline points="1798,254 1634,251 1498,248 1384,245 1287,243 1203,241 1130,239 1066,238 1009,236 958,235 913,234" fill="none" stroke="#596067"/>
<polyline points="-597,406 -442,389 -300,373 -168,359 -45,346 69,334 175,322 274,312 366,302 453,292 535,283 612,275 685,267 754,260 819,253 881,246 939,240 995,234 1048,228" fill="none" stroke="#596067"/>
<polyline points="-588,403 -436,387 -295,371 -165,357 -44,344 69,332 173,321 271,310 363,301 450,291 531,283 607,274 679,267 748,259 812,252 874,246 932,239 987,233 1040,228" fill="none" stroke="#596067"/>
<polyline points="-579,400 -429,384 -290,369 -162,356 -43,343 69,331 172,320 269,309 360,300 446,291 526,282 602,274 674,266 742,259 806,252 867,245 925,239 980,233 1032,228" fill="none" stroke="#596067"/>
<polyline points="-570,398 -423,382 -286,368 -159,354 -41,341 68,330 171,319 267,308 357,299 442,290 522,281 597,273 668,266 736,258 799,252 860,245 918,239 973,233 1025,228" fill="none" stroke="#596067"/>
<polyline points="-562,395 -416,380 -282,366 -156,352 -40,340 68,328 170,318 265,308 354,298 438,289 517,281 592,273 663,265 730,258 793,251 854,245 911,239 965,233 1017,227" fill="none" stroke="#5a6168"/>
<polyline points="-554,393 -410,378 -277,364 -154,351 -39,339 68,327 169,317 263,307 351,297 435,288 513,280 587,272 658,265 724,258 787,251 847,245 904,239 958,233 1010,227" fill="none" stroke="#596067"/>
<polyline points="-546,391 -404,376 -273,362 -151,349 -38,337 68,326 168,315 261,306 349,296 431,288 509,279 583,272 652,264 718,257 781,251 841,244 897,238 951,233 1003,227" fill="none" stroke="#596067"/>
<polyline points="-538,389 -398,374 -269,360 -149,348 -37,336 68,325 167,314 259,305 346,296 428,287 505,279 578,271 647,264 713,257 775,250 834,244 891,238 945,233 996,227" fill="none" stroke="#596067"/>
<polyline points="-530,386 -393,372 -265,359 -146,346 -35,334 68,324 166,313 257,304 343,295 424,286 501,278 573,271 642,263 707,257 769,250 828,244 884,238 938,232 989,227" fill="none" stroke="#596067"/>
<polyline points="-523,384 -387,370 -261,357 -144,345 -34,333 68,322 165,312 255,303 340,294 421,286 497,278 569,270 637,263 702,256 764,250 822,244 878,238 931,232 982,227" fill="none" stroke="#5a6168"/>
<line x1="366" y1="253" x2="394" y2="489" stroke="#8c9399" stroke-width="1"/>
<line x1="765" y1="253" x2="768" y2="465" stroke="#838a90" stroke-width="1"/>
<line x1="768" y1="466" x2="1151" y2="392" stroke="#7b8288" stroke-width="1"/>
<line x1="4" y1="610" x2="284" y2="572" stroke="#858c92" stroke-width="1" stroke-dasharray="2 2"/>
<line x1="4" y1="912" x2="1151" y2="582" stroke="#c0503c" stroke-width="1.2"/>
<line x1="308" y1="444" x2="800" y2="947" stroke="#4a64c8" stroke-width="1.2"/>
<text x="368" y="412" font-size="10" fill="#3f464d" font-family="Liberation Sans">-Z</text>
<polygon points="436.0,384.0 520.0,372.0 544.0,373.0 606.0,397.0 715.0,434.0 737.0,446.0 752.0,468.0 764.0,505.0 785.0,511.0 838.0,534.0 860.0,543.0 880.0,566.0 900.0,630.0 880.0,690.0 840.0,725.0 760.0,722.0 728.0,707.0 700.0,676.0 678.0,640.0 640.0,640.0 615.0,720.0 580.0,795.0 490.0,825.0 406.0,782.0 373.0,721.0 343.0,665.0 317.0,624.0 308.0,590.0 292.0,530.0 337.0,505.0 366.0,493.0 405.0,491.0 435.0,491.0" fill="#000"/>
<polygon points="542.0,373.0 610.0,364.0 610.0,399.0" fill="#5d646b"/>
<polygon points="624.0,368.0 692.0,387.0 624.0,398.0" fill="#5d646b"/>
<polygon points="640.0,412.0 717.0,399.0 717.0,437.0" fill="#5d646b"/>
<polygon points="740.0,447.0 760.0,440.0 770.0,470.0" fill="#5d646b"/>
<path d="M452 496 C450.8 490.7 444.6 474.3 445 464 C445.4 453.7 450.3 443.2 454.6 434 C458.9 424.8 465.1 415.8 470.8 408.5 C476.5 401.2 481.3 395.0 489 390 C496.7 385.0 507.7 381.2 517 378.5 C526.3 375.8 540.0 374.8 544.6 374" stroke="#3e3e3e" stroke-width="3.5" fill="none" stroke-linecap="butt"/>
<path d="M551.5 597.7 C547.7 590.8 532.8 568.7 528.5 556 C524.2 543.3 525.2 533.0 526 521.5 C526.8 510.0 529.2 497.8 533 487 C536.8 476.2 543.2 465.5 549 457 C554.8 448.5 560.7 441.8 567.7 436 C574.7 430.2 581.6 425.4 590.8 422 C600.0 418.6 613.0 416.9 623 415.4 C633.0 413.9 646.2 413.4 650.8 413" stroke="#3e3e3e" stroke-width="5.5" fill="none" stroke-linecap="butt"/>
<path d="M333.5 637.7 C331.2 628.9 321.6 601.3 320 585 C318.4 568.7 321.2 552.8 324 540 C326.8 527.2 330.0 515.5 337 508 C344.0 500.5 354.7 497.5 366 495 C377.3 492.5 398.2 493.3 404.6 493" stroke="#3e3e3e" stroke-width="2.5" fill="none" stroke-linecap="butt"/>
<path d="M325.8 561 C328.2 557.5 333.3 546.2 340 540 C346.7 533.8 352.7 528.8 366 524 C379.3 519.2 405.6 511.9 420 511 C434.4 510.1 442.7 515.3 452.7 518.5 C462.7 521.7 475.4 528.1 480 530" stroke="#3e3e3e" stroke-width="5" fill="none" stroke-linecap="butt"/>
<path d="M380 723 C378.8 717.5 373.0 702.2 373 690 C373.0 677.8 376.3 661.0 380 650 C383.7 639.0 386.7 632.7 395 624 C403.3 615.3 417.5 604.7 430 598 C442.5 591.3 456.7 587.0 470 584 C483.3 581.0 503.3 580.7 510 580" stroke="#3e3e3e" stroke-width="5" fill="none" stroke-linecap="butt"/>
<polygon points="608.0,364.0 624.0,366.0 625.0,397.0 610.0,397.0" fill="#414141" stroke="#2c2c2c" stroke-width="0.8"/>
<line x1="613.6" y1="364.7" x2="615.2" y2="397.0" stroke="#4b4b4b" stroke-width="0.8"/>
<polygon points="715.0,395.0 736.0,384.0 737.0,447.0 717.0,446.0" fill="#414141" stroke="#2c2c2c" stroke-width="0.8"/>
<line x1="722.4" y1="391.1" x2="724.0" y2="446.4" stroke="#4b4b4b" stroke-width="0.8"/>
<polygon points="418.0,375.0 617.0,349.0 614.0,365.0 437.0,382.0" fill="#414141" stroke="#2c2c2c" stroke-width="0.8"/>
<line x1="424.6" y1="377.4" x2="616.0" y2="354.6" stroke="#4b4b4b" stroke-width="0.8"/>
<polygon points="617.0,349.0 736.0,384.0 716.0,388.0 624.0,367.0" fill="#414141" stroke="#2c2c2c" stroke-width="0.8"/>
<line x1="619.5" y1="355.3" x2="729.0" y2="385.4" stroke="#4b4b4b" stroke-width="0.8"/>
<polygon points="502.0,416.0 736.0,384.0 736.0,397.0 516.0,430.0" fill="#414141" stroke="#2c2c2c" stroke-width="0.8"/>
<line x1="506.9" y1="420.9" x2="736.0" y2="388.6" stroke="#4b4b4b" stroke-width="0.8"/>
<polygon points="418.0,374.0 505.0,414.0 500.0,430.0 419.0,389.0" fill="#414141" stroke="#2c2c2c" stroke-width="0.8"/>
<line x1="418.4" y1="379.2" x2="503.2" y2="419.6" stroke="#4b4b4b" stroke-width="0.8"/>
<polygon points="418.0,377.0 437.0,390.0 448.0,495.0 432.0,495.0" fill="#414141" stroke="#2c2c2c" stroke-width="0.8"/>
<line x1="424.6" y1="381.6" x2="437.6" y2="495.0" stroke="#4b4b4b" stroke-width="0.8"/>
<polygon points="497.0,420.0 516.0,428.0 521.0,562.0 504.0,562.0" fill="#414141" stroke="#2c2c2c" stroke-width="0.8"/>
<line x1="503.6" y1="422.8" x2="509.9" y2="562.0" stroke="#4b4b4b" stroke-width="0.8"/>
<polygon points="433.0,492.0 448.0,494.0 521.0,556.0 506.0,562.0" fill="#414141" stroke="#2c2c2c" stroke-width="0.8"/>
<line x1="438.2" y1="492.7" x2="511.2" y2="559.9" stroke="#4b4b4b" stroke-width="0.8"/>
<polygon points="281.0,517.0 435.0,491.0 435.0,505.0 302.0,527.0" fill="#414141" stroke="#2c2c2c" stroke-width="0.8"/>
<line x1="288.4" y1="520.5" x2="435.0" y2="495.9" stroke="#4b4b4b" stroke-width="0.8"/>
<polygon points="281.0,517.0 293.0,530.0 339.0,588.0 331.0,590.0" fill="#414141" stroke="#2c2c2c" stroke-width="0.8"/>
<line x1="285.2" y1="521.5" x2="333.8" y2="589.3" stroke="#4b4b4b" stroke-width="0.8"/>
<polygon points="281.0,518.0 294.0,532.0 331.0,738.0 318.0,738.0" fill="#414141" stroke="#2c2c2c" stroke-width="0.8"/>
<line x1="285.6" y1="522.9" x2="322.6" y2="738.0" stroke="#4b4b4b" stroke-width="0.8"/>
<polygon points="311.0,735.0 331.0,735.0 333.0,750.0 313.0,750.0" fill="#414141" stroke="#2c2c2c" stroke-width="0.8"/>
<polygon points="327.0,691.0 345.0,689.0 346.0,701.0 329.0,703.0" fill="#414141" stroke="#2c2c2c" stroke-width="0.8"/>
<line x1="327.7" y1="695.2" x2="345.4" y2="693.2" stroke="#4b4b4b" stroke-width="0.8"/>
<polygon points="340.0,721.0 376.0,716.0 377.0,724.0 342.0,729.0" fill="#414141" stroke="#2c2c2c" stroke-width="0.8"/>
<line x1="340.7" y1="723.8" x2="376.4" y2="718.8" stroke="#4b4b4b" stroke-width="0.8"/>
<polygon points="316.0,702.0 331.0,702.0 380.0,796.0 365.0,804.0" fill="#414141" stroke="#2c2c2c" stroke-width="0.8"/>
<line x1="321.2" y1="702.0" x2="370.2" y2="801.2" stroke="#4b4b4b" stroke-width="0.8"/>
<polygon points="331.0,589.0 520.0,559.0 520.0,573.0 354.0,603.0" fill="#414141" stroke="#2c2c2c" stroke-width="0.8"/>
<line x1="339.1" y1="593.9" x2="520.0" y2="563.9" stroke="#4b4b4b" stroke-width="0.8"/>
<polygon points="331.0,591.0 355.0,603.0 388.0,851.0 372.0,853.0" fill="#414141" stroke="#2c2c2c" stroke-width="0.8"/>
<line x1="339.4" y1="595.2" x2="377.6" y2="852.3" stroke="#4b4b4b" stroke-width="0.8"/>
<polygon points="382.0,791.0 617.0,733.0 617.0,748.0 384.0,812.0" fill="#414141" stroke="#2c2c2c" stroke-width="0.8"/>
<line x1="382.7" y1="798.4" x2="617.0" y2="738.2" stroke="#4b4b4b" stroke-width="0.8"/>
<polygon points="619.0,560.0 640.0,560.0 642.0,770.0 621.0,774.0" fill="#414141" stroke="#2c2c2c" stroke-width="0.8"/>
<line x1="626.4" y1="560.0" x2="628.4" y2="772.6" stroke="#4b4b4b" stroke-width="0.8"/>
<polygon points="640.0,716.0 734.0,692.0 734.0,707.0 640.0,730.0" fill="#414141" stroke="#2c2c2c" stroke-width="0.8"/>
<line x1="640.0" y1="720.9" x2="734.0" y2="697.2" stroke="#4b4b4b" stroke-width="0.8"/>
<polygon points="363.0,847.0 858.0,708.0 864.0,726.0 373.0,869.0" fill="#414141" stroke="#2c2c2c" stroke-width="0.8"/>
<line x1="366.5" y1="854.7" x2="860.1" y2="714.3" stroke="#4b4b4b" stroke-width="0.8"/>
<line x1="366" y1="853" x2="860" y2="714" stroke="#4c4c4c" stroke-width="1.2"/>
<polygon points="771.0,498.0 862.0,482.0 840.0,501.0 772.0,513.0" fill="#414141" stroke="#2c2c2c" stroke-width="0.8"/>
<line x1="771.4" y1="503.2" x2="854.3" y2="488.6" stroke="#4b4b4b" stroke-width="0.8"/>
<polygon points="840.0,500.0 862.0,482.0 861.0,543.0 839.0,541.0" fill="#414141" stroke="#2c2c2c" stroke-width="0.8"/>
<line x1="847.7" y1="493.7" x2="846.7" y2="541.7" stroke="#4b4b4b" stroke-width="0.8"/>
<ellipse cx="668" cy="542" rx="112" ry="102" transform="rotate(-72.3 668 542)" fill="url(#dome)" stroke="#2a2a2a" stroke-width="0.8"/>
<ellipse cx="668" cy="542" rx="108.1" ry="98.4" transform="rotate(-72.3 668 542)" fill="none" stroke="#2e2e2e" stroke-width="0.6"/>
<ellipse cx="668" cy="542" rx="104.2" ry="94.9" transform="rotate(-72.3 668 542)" fill="none" stroke="#2e2e2e" stroke-width="0.6"/>
<ellipse cx="668" cy="542" rx="96.3" ry="87.7" transform="rotate(-72.3 668 542)" fill="none" stroke="#2e2e2e" stroke-width="0.6"/>
<ellipse cx="668" cy="542" rx="86.2" ry="78.5" transform="rotate(-72.3 668 542)" fill="none" stroke="#2e2e2e" stroke-width="0.6"/>
<ellipse cx="668" cy="542" rx="73.9" ry="67.3" transform="rotate(-72.3 668 542)" fill="none" stroke="#2e2e2e" stroke-width="0.6"/>
<ellipse cx="668" cy="542" rx="61.6" ry="56.1" transform="rotate(-72.3 668 542)" fill="none" stroke="#2e2e2e" stroke-width="0.6"/>
<ellipse cx="668" cy="542" rx="50.4" ry="45.9" transform="rotate(-72.3 668 542)" fill="none" stroke="#2e2e2e" stroke-width="0.6"/>
<line x1="682.3" y1="497.2" x2="702.1" y2="435.3" stroke="#2e2e2e" stroke-width="0.6"/>
<line x1="694.2" y1="503.4" x2="730.4" y2="450.1" stroke="#2e2e2e" stroke-width="0.6"/>
<line x1="703.6" y1="513.4" x2="752.7" y2="473.9" stroke="#2e2e2e" stroke-width="0.6"/>
<line x1="709.4" y1="526.2" x2="766.6" y2="504.4" stroke="#2e2e2e" stroke-width="0.6"/>
<line x1="711.2" y1="540.5" x2="770.9" y2="538.5" stroke="#2e2e2e" stroke-width="0.6"/>
<line x1="708.8" y1="555.0" x2="765.2" y2="573.0" stroke="#2e2e2e" stroke-width="0.6"/>
<line x1="702.4" y1="568.2" x2="749.9" y2="604.5" stroke="#2e2e2e" stroke-width="0.6"/>
<line x1="692.6" y1="578.9" x2="726.6" y2="629.8" stroke="#2e2e2e" stroke-width="0.6"/>
<line x1="680.4" y1="585.9" x2="697.6" y2="646.5" stroke="#2e2e2e" stroke-width="0.6"/>
<line x1="667.0" y1="588.6" x2="665.6" y2="653.1" stroke="#2e2e2e" stroke-width="0.6"/>
<line x1="653.7" y1="586.8" x2="633.9" y2="648.7" stroke="#2e2e2e" stroke-width="0.6"/>
<line x1="641.8" y1="580.6" x2="605.6" y2="633.9" stroke="#2e2e2e" stroke-width="0.6"/>
<line x1="632.4" y1="570.6" x2="583.3" y2="610.1" stroke="#2e2e2e" stroke-width="0.6"/>
<line x1="626.6" y1="557.8" x2="569.4" y2="579.6" stroke="#2e2e2e" stroke-width="0.6"/>
<line x1="624.8" y1="543.5" x2="565.1" y2="545.5" stroke="#2e2e2e" stroke-width="0.6"/>
<line x1="627.2" y1="529.0" x2="570.8" y2="511.0" stroke="#2e2e2e" stroke-width="0.6"/>
<line x1="633.6" y1="515.8" x2="586.1" y2="479.5" stroke="#2e2e2e" stroke-width="0.6"/>
<line x1="643.4" y1="505.1" x2="609.4" y2="454.2" stroke="#2e2e2e" stroke-width="0.6"/>
<line x1="655.6" y1="498.1" x2="638.4" y2="437.5" stroke="#2e2e2e" stroke-width="0.6"/>
<line x1="669.0" y1="495.4" x2="670.4" y2="430.9" stroke="#2e2e2e" stroke-width="0.6"/>
<ellipse cx="505" cy="718" rx="114.7" ry="105.1" transform="rotate(136.9 505 718)" fill="url(#dome)" stroke="#2a2a2a" stroke-width="0.8"/>
<ellipse cx="505" cy="718" rx="110.7" ry="101.4" transform="rotate(136.9 505 718)" fill="none" stroke="#2e2e2e" stroke-width="0.6"/>
<ellipse cx="505" cy="718" rx="106.7" ry="97.7" transform="rotate(136.9 505 718)" fill="none" stroke="#2e2e2e" stroke-width="0.6"/>
<ellipse cx="505" cy="718" rx="98.6" ry="90.4" transform="rotate(136.9 505 718)" fill="none" stroke="#2e2e2e" stroke-width="0.6"/>
<ellipse cx="505" cy="718" rx="88.3" ry="80.9" transform="rotate(136.9 505 718)" fill="none" stroke="#2e2e2e" stroke-width="0.6"/>
<ellipse cx="505" cy="718" rx="75.7" ry="69.4" transform="rotate(136.9 505 718)" fill="none" stroke="#2e2e2e" stroke-width="0.6"/>
<ellipse cx="505" cy="718" rx="63.1" ry="57.8" transform="rotate(136.9 505 718)" fill="none" stroke="#2e2e2e" stroke-width="0.6"/>
<ellipse cx="505" cy="718" rx="51.6" ry="47.3" transform="rotate(136.9 505 718)" fill="none" stroke="#2e2e2e" stroke-width="0.6"/>
<line x1="469.8" y1="750.9" x2="421.3" y2="796.4" stroke="#2e2e2e" stroke-width="0.6"/>
<line x1="462.2" y1="739.3" x2="403.2" y2="768.8" stroke="#2e2e2e" stroke-width="0.6"/>
<line x1="458.8" y1="725.7" x2="395.0" y2="736.3" stroke="#2e2e2e" stroke-width="0.6"/>
<line x1="459.9" y1="711.3" x2="397.7" y2="702.0" stroke="#2e2e2e" stroke-width="0.6"/>
<line x1="465.4" y1="697.5" x2="410.8" y2="669.2" stroke="#2e2e2e" stroke-width="0.6"/>
<line x1="474.8" y1="685.8" x2="433.2" y2="641.3" stroke="#2e2e2e" stroke-width="0.6"/>
<line x1="487.2" y1="677.2" x2="462.6" y2="620.8" stroke="#2e2e2e" stroke-width="0.6"/>
<line x1="501.3" y1="672.6" x2="496.1" y2="609.9" stroke="#2e2e2e" stroke-width="0.6"/>
<line x1="515.7" y1="672.4" x2="530.5" y2="609.5" stroke="#2e2e2e" stroke-width="0.6"/>
<line x1="529.1" y1="676.7" x2="562.5" y2="619.8" stroke="#2e2e2e" stroke-width="0.6"/>
<line x1="540.2" y1="685.1" x2="588.7" y2="639.6" stroke="#2e2e2e" stroke-width="0.6"/>
<line x1="547.8" y1="696.7" x2="606.8" y2="667.2" stroke="#2e2e2e" stroke-width="0.6"/>
<line x1="551.2" y1="710.3" x2="615.0" y2="699.7" stroke="#2e2e2e" stroke-width="0.6"/>
<line x1="550.1" y1="724.7" x2="612.3" y2="734.0" stroke="#2e2e2e" stroke-width="0.6"/>
<line x1="544.6" y1="738.5" x2="599.2" y2="766.8" stroke="#2e2e2e" stroke-width="0.6"/>
<line x1="535.2" y1="750.2" x2="576.8" y2="794.7" stroke="#2e2e2e" stroke-width="0.6"/>
<line x1="522.8" y1="758.8" x2="547.4" y2="815.2" stroke="#2e2e2e" stroke-width="0.6"/>
<line x1="508.7" y1="763.4" x2="513.9" y2="826.1" stroke="#2e2e2e" stroke-width="0.6"/>
<line x1="494.3" y1="763.6" x2="479.5" y2="826.5" stroke="#2e2e2e" stroke-width="0.6"/>
<line x1="480.9" y1="759.3" x2="447.5" y2="816.2" stroke="#2e2e2e" stroke-width="0.6"/>
<ellipse cx="814" cy="635" rx="82.7" ry="98.7" transform="rotate(-152 814 635)" fill="url(#dome)" stroke="#2a2a2a" stroke-width="0.8"/>
<ellipse cx="814" cy="635" rx="79.8" ry="95.2" transform="rotate(-152 814 635)" fill="none" stroke="#2e2e2e" stroke-width="0.6"/>
<ellipse cx="814" cy="635" rx="76.9" ry="91.8" transform="rotate(-152 814 635)" fill="none" stroke="#2e2e2e" stroke-width="0.6"/>
<ellipse cx="814" cy="635" rx="71.1" ry="84.9" transform="rotate(-152 814 635)" fill="none" stroke="#2e2e2e" stroke-width="0.6"/>
<ellipse cx="814" cy="635" rx="63.7" ry="76.0" transform="rotate(-152 814 635)" fill="none" stroke="#2e2e2e" stroke-width="0.6"/>
<ellipse cx="814" cy="635" rx="54.6" ry="65.1" transform="rotate(-152 814 635)" fill="none" stroke="#2e2e2e" stroke-width="0.6"/>
<ellipse cx="814" cy="635" rx="45.5" ry="54.3" transform="rotate(-152 814 635)" fill="none" stroke="#2e2e2e" stroke-width="0.6"/>
<ellipse cx="814" cy="635" rx="37.2" ry="44.4" transform="rotate(-152 814 635)" fill="none" stroke="#2e2e2e" stroke-width="0.6"/>
<line x1="783.3" y1="618.7" x2="741.0" y2="596.2" stroke="#2e2e2e" stroke-width="0.6"/>
<line x1="790.8" y1="608.2" x2="758.9" y2="571.1" stroke="#2e2e2e" stroke-width="0.6"/>
<line x1="800.6" y1="600.3" x2="782.2" y2="552.4" stroke="#2e2e2e" stroke-width="0.6"/>
<line x1="811.7" y1="595.8" x2="808.6" y2="541.7" stroke="#2e2e2e" stroke-width="0.6"/>
<line x1="823.0" y1="595.2" x2="835.5" y2="540.1" stroke="#2e2e2e" stroke-width="0.6"/>
<line x1="833.5" y1="598.4" x2="860.3" y2="547.9" stroke="#2e2e2e" stroke-width="0.6"/>
<line x1="842.0" y1="605.2" x2="880.6" y2="564.1" stroke="#2e2e2e" stroke-width="0.6"/>
<line x1="847.8" y1="615.0" x2="894.4" y2="587.3" stroke="#2e2e2e" stroke-width="0.6"/>
<line x1="850.3" y1="626.7" x2="900.3" y2="615.2" stroke="#2e2e2e" stroke-width="0.6"/>
<line x1="849.2" y1="639.2" x2="897.8" y2="645.0" stroke="#2e2e2e" stroke-width="0.6"/>
<line x1="844.7" y1="651.3" x2="887.0" y2="673.8" stroke="#2e2e2e" stroke-width="0.6"/>
<line x1="837.2" y1="661.8" x2="869.1" y2="698.9" stroke="#2e2e2e" stroke-width="0.6"/>
<line x1="827.4" y1="669.7" x2="845.8" y2="717.6" stroke="#2e2e2e" stroke-width="0.6"/>
<line x1="816.3" y1="674.2" x2="819.4" y2="728.3" stroke="#2e2e2e" stroke-width="0.6"/>
<line x1="805.0" y1="674.8" x2="792.5" y2="729.9" stroke="#2e2e2e" stroke-width="0.6"/>
<line x1="794.5" y1="671.6" x2="767.7" y2="722.1" stroke="#2e2e2e" stroke-width="0.6"/>
<line x1="786.0" y1="664.8" x2="747.4" y2="705.9" stroke="#2e2e2e" stroke-width="0.6"/>
<line x1="780.2" y1="655.0" x2="733.6" y2="682.7" stroke="#2e2e2e" stroke-width="0.6"/>
<line x1="777.7" y1="643.3" x2="727.7" y2="654.8" stroke="#2e2e2e" stroke-width="0.6"/>
<line x1="778.8" y1="630.8" x2="730.2" y2="625.0" stroke="#2e2e2e" stroke-width="0.6"/>
<ellipse cx="698.5" cy="558" rx="38" ry="42" fill="#464646" stroke="#2c2c2c" stroke-width="0.7"/>
<ellipse cx="699.5" cy="559" rx="34" ry="38" fill="none" stroke="#353535" stroke-width="0.7"/>
<ellipse cx="701.5" cy="562" rx="32" ry="36" fill="#000"/>
<rect x="647" y="555" width="11" height="32" fill="#000"/>
<rect x="645" y="555" width="15" height="3" fill="#000"/><rect x="645" y="584" width="15" height="3" fill="#000"/>
<path d="M658 577.4 L685.5 587.2" stroke="#000" stroke-width="5.5"/>
<ellipse cx="738" cy="558" rx="7" ry="9" fill="#000"/>
<ellipse cx="728" cy="578" rx="7" ry="10" fill="#000"/>
<path d="M697.5 536.0 L704.5 534.0" stroke="#80c090" stroke-width="0.8"/>
<path d="M697.5 540.4 L701.5 539.4" stroke="#80c090" stroke-width="0.8"/>
<path d="M697.5 546.8 L704.5 544.8" stroke="#80c090" stroke-width="0.8"/>
<path d="M697.5 551.2 L701.5 550.2" stroke="#80c090" stroke-width="0.8"/>
<path d="M697.5 573.8 L704.5 571.8" stroke="#80c090" stroke-width="0.8"/>
<path d="M697.5 578.2 L701.5 577.2" stroke="#80c090" stroke-width="0.8"/>
<path d="M697.5 584.6 L704.5 582.6" stroke="#80c090" stroke-width="0.8"/>
<path d="M697.5 589.0 L701.5 588.0" stroke="#80c090" stroke-width="0.8"/>
<ellipse cx="529.6" cy="739" rx="41" ry="40" fill="#464646" stroke="#2c2c2c" stroke-width="0.7"/>
<ellipse cx="530.6" cy="740" rx="37" ry="36" fill="none" stroke="#353535" stroke-width="0.7"/>
<ellipse cx="532.6" cy="743" rx="35" ry="34" fill="#000"/>
<rect x="477" y="739" width="10" height="34" fill="#000"/>
<rect x="475" y="739" width="14" height="3" fill="#000"/><rect x="475" y="770" width="14" height="3" fill="#000"/>
<path d="M487 762.8 L515.1 766.8" stroke="#000" stroke-width="5.0"/>
<ellipse cx="571" cy="737" rx="7" ry="9" fill="#000"/>
<ellipse cx="556" cy="766" rx="8" ry="9" fill="#000"/>
<path d="M528.6 718.5 L535.6 716.5" stroke="#80c090" stroke-width="0.8"/>
<path d="M528.6 722.6 L532.6 721.6" stroke="#80c090" stroke-width="0.8"/>
<path d="M528.6 728.7 L535.6 726.7" stroke="#80c090" stroke-width="0.8"/>
<path d="M528.6 732.8 L532.6 731.8" stroke="#80c090" stroke-width="0.8"/>
<path d="M528.6 754.2 L535.6 752.2" stroke="#80c090" stroke-width="0.8"/>
<path d="M528.6 758.3 L532.6 757.3" stroke="#80c090" stroke-width="0.8"/>
<path d="M528.6 764.4 L535.6 762.4" stroke="#80c090" stroke-width="0.8"/>
<path d="M528.6 768.5 L532.6 767.5" stroke="#80c090" stroke-width="0.8"/>
<ellipse cx="843" cy="650" rx="33" ry="37" fill="#464646" stroke="#2c2c2c" stroke-width="0.7"/>
<ellipse cx="844" cy="651" rx="29" ry="33" fill="none" stroke="#353535" stroke-width="0.7"/>
<ellipse cx="846" cy="654" rx="27" ry="31" fill="#000"/>
<rect x="801" y="649" width="9" height="30" fill="#000"/>
<rect x="799" y="649" width="13" height="3" fill="#000"/><rect x="799" y="676" width="13" height="3" fill="#000"/>
<path d="M810 670.0 L832.5 675.7" stroke="#000" stroke-width="4.5"/>
<ellipse cx="878" cy="650" rx="7" ry="8" fill="#000"/>
<ellipse cx="870" cy="669" rx="9" ry="10" fill="#000"/>
<path d="M842 631.8 L849 629.8" stroke="#80c090" stroke-width="0.8"/>
<path d="M842 635.4 L846 634.4" stroke="#80c090" stroke-width="0.8"/>
<path d="M842 641.0 L849 639.0" stroke="#80c090" stroke-width="0.8"/>
<path d="M842 644.7 L846 643.7" stroke="#80c090" stroke-width="0.8"/>
<path d="M842 664.3 L849 662.3" stroke="#80c090" stroke-width="0.8"/>
<path d="M842 668.0 L846 667.0" stroke="#80c090" stroke-width="0.8"/>
<path d="M842 673.6 L849 671.6" stroke="#80c090" stroke-width="0.8"/>
<path d="M842 677.2 L846 676.2" stroke="#80c090" stroke-width="0.8"/>
<polygon points="680.0,483.0 702.0,479.0 706.0,510.0 684.0,514.0" fill="#bdbdbd"/>
<line x1="680.4" y1="486.4" x2="702.4" y2="482.4" stroke="#777" stroke-width="0.7"/>
<line x1="680.9" y1="489.9" x2="702.9" y2="485.9" stroke="#777" stroke-width="0.7"/>
<line x1="681.3" y1="493.3" x2="703.3" y2="489.3" stroke="#777" stroke-width="0.7"/>
<line x1="681.8" y1="496.8" x2="703.8" y2="492.8" stroke="#777" stroke-width="0.7"/>
<line x1="682.2" y1="500.2" x2="704.2" y2="496.2" stroke="#777" stroke-width="0.7"/>
<line x1="682.7" y1="503.7" x2="704.7" y2="499.7" stroke="#777" stroke-width="0.7"/>
<line x1="683.1" y1="507.1" x2="705.1" y2="503.1" stroke="#777" stroke-width="0.7"/>
<line x1="683.6" y1="510.6" x2="705.6" y2="506.6" stroke="#777" stroke-width="0.7"/>
<line x1="682" y1="486" x2="687" y2="485" stroke="#d04040" stroke-width="1"/>
<polygon points="507.0,667.0 528.0,662.0 535.0,691.0 513.0,696.0" fill="#bdbdbd"/>
<line x1="507.7" y1="670.2" x2="528.8" y2="665.2" stroke="#777" stroke-width="0.7"/>
<line x1="508.3" y1="673.4" x2="529.6" y2="668.4" stroke="#777" stroke-width="0.7"/>
<line x1="509.0" y1="676.7" x2="530.3" y2="671.7" stroke="#777" stroke-width="0.7"/>
<line x1="509.7" y1="679.9" x2="531.1" y2="674.9" stroke="#777" stroke-width="0.7"/>
<line x1="510.3" y1="683.1" x2="531.9" y2="678.1" stroke="#777" stroke-width="0.7"/>
<line x1="511.0" y1="686.3" x2="532.7" y2="681.3" stroke="#777" stroke-width="0.7"/>
<line x1="511.7" y1="689.6" x2="533.4" y2="684.6" stroke="#777" stroke-width="0.7"/>
<line x1="512.3" y1="692.8" x2="534.2" y2="687.8" stroke="#777" stroke-width="0.7"/>
<line x1="509" y1="670" x2="514" y2="669" stroke="#d04040" stroke-width="1"/>
<polygon points="830.0,585.0 846.0,581.0 850.0,608.0 834.0,611.0" fill="#bdbdbd"/>
<line x1="830.4" y1="587.9" x2="846.4" y2="584.0" stroke="#777" stroke-width="0.7"/>
<line x1="830.9" y1="590.8" x2="846.9" y2="587.0" stroke="#777" stroke-width="0.7"/>
<line x1="831.3" y1="593.7" x2="847.3" y2="590.0" stroke="#777" stroke-width="0.7"/>
<line x1="831.8" y1="596.6" x2="847.8" y2="593.0" stroke="#777" stroke-width="0.7"/>
<line x1="832.2" y1="599.4" x2="848.2" y2="596.0" stroke="#777" stroke-width="0.7"/>
<line x1="832.7" y1="602.3" x2="848.7" y2="599.0" stroke="#777" stroke-width="0.7"/>
<line x1="833.1" y1="605.2" x2="849.1" y2="602.0" stroke="#777" stroke-width="0.7"/>
<line x1="833.6" y1="608.1" x2="849.6" y2="605.0" stroke="#777" stroke-width="0.7"/>
<line x1="832" y1="588" x2="837" y2="587" stroke="#d04040" stroke-width="1"/>
<path d="M590 425 Q690 440 741 476" stroke="#000" stroke-width="2.5" fill="none"/>
<path d="M420 620 Q520 615 575 655" stroke="#000" stroke-width="2.5" fill="none"/>
<path d="M800 541 Q860 555 879 575" stroke="#000" stroke-width="2.5" fill="none"/>
<path d="M758 500 L749 462 L747 448 L752 443 L758 447 L764 470 L772 505 L777 530" stroke="#c04040" stroke-width="3.6" fill="none" stroke-linejoin="round"/>
<path d="M758 500 L749 462 L747 448 L752 443 L758 447 L764 470 L772 505 L777 530" stroke="#eee8e8" stroke-width="3.6" fill="none" stroke-dasharray="1.6 1.4" stroke-linejoin="round"/>
<path d="M762 518 L766 530 L776 532" stroke="#b01818" stroke-width="3.5" fill="none" stroke-linecap="round"/>
<ellipse cx="752" cy="490" rx="15" ry="8" fill="#000" transform="rotate(-20 752 490)"/>
<circle cx="761" cy="491" r="8" fill="#000"/>
<rect x="759" y="495" width="9" height="24" rx="2" fill="#000"/>
<rect x="756" y="476" width="3" height="10" fill="#000"/>
<path d="M590 690 L580 650 L577 630 L582 625 L588 632 L600 665 L612 695 L619 705" stroke="#c04040" stroke-width="3.6" fill="none" stroke-linejoin="round"/>
<path d="M590 690 L580 650 L577 630 L582 625 L588 632 L600 665 L612 695 L619 705" stroke="#eee8e8" stroke-width="3.6" fill="none" stroke-dasharray="1.6 1.4" stroke-linejoin="round"/>
<path d="M595 700 L603 708 L617 704" stroke="#b01818" stroke-width="3.5" fill="none" stroke-linecap="round"/>
<ellipse cx="583" cy="680" rx="15" ry="8" fill="#000" transform="rotate(-20 583 680)"/>
<circle cx="592" cy="681" r="8" fill="#000"/>
<rect x="590" y="684" width="9" height="22" rx="2" fill="#000"/>
<rect x="587" y="666" width="3" height="10" fill="#000"/>
<path d="M897 600 L889 568 L887 553 L892 549 L898 556 L903 585 L907 615 L906 624" stroke="#c04040" stroke-width="3.6" fill="none" stroke-linejoin="round"/>
<path d="M897 600 L889 568 L887 553 L892 549 L898 556 L903 585 L907 615 L906 624" stroke="#eee8e8" stroke-width="3.6" fill="none" stroke-dasharray="1.6 1.4" stroke-linejoin="round"/>
<path d="M900 612 L903 622 L906 624" stroke="#b01818" stroke-width="3.5" fill="none" stroke-linecap="round"/>
<ellipse cx="897" cy="596" rx="15" ry="8" fill="#000" transform="rotate(-20 897 596)"/>
<circle cx="906" cy="597" r="8" fill="#000"/>
<rect x="900" y="600" width="9" height="22" rx="2" fill="#000"/>
<rect x="901" y="582" width="3" height="10" fill="#000"/>
<ellipse cx="536" cy="828" rx="16" ry="14" fill="#000"/>
<ellipse cx="526" cy="816" rx="9" ry="5" fill="#4a4a4a" stroke="#2a2a2a" stroke-width="0.6"/>
<ellipse cx="700" cy="654" rx="22" ry="17" fill="#000"/>
<ellipse cx="690" cy="642" rx="9" ry="5" fill="#4a4a4a" stroke="#2a2a2a" stroke-width="0.6"/>
<ellipse cx="836" cy="733" rx="16" ry="15" fill="#000"/>
<ellipse cx="826" cy="721" rx="9" ry="5" fill="#4a4a4a" stroke="#2a2a2a" stroke-width="0.6"/>
<circle cx="566" cy="806" r="3.5" fill="#2f6fd8"/>
<circle cx="538" cy="812" r="2.5" fill="#2f6fd8"/>
<circle cx="727" cy="631" r="3.5" fill="#2f6fd8"/>
<circle cx="700" cy="638" r="2.5" fill="#2f6fd8"/>
<circle cx="864" cy="712" r="3.5" fill="#2f6fd8"/>
<circle cx="843" cy="719" r="2.5" fill="#2f6fd8"/>
<line x1="538" y1="812" x2="566" y2="806" stroke="#000" stroke-width="1.5"/>
<line x1="843" y1="719" x2="864" y2="712" stroke="#000" stroke-width="1.5"/>
<path d="M19 907.5 L41 903 V925 L19 930Z" fill="#6f767d" stroke="#c8c8c8" stroke-width="0.9"/>
<path d="M19.5 930 V908" stroke="#30d030" stroke-width="1.2"/><path d="M19 930 L41 925" stroke="#f03030" stroke-width="1.2"/><path d="M19 930 L30 939" stroke="#3070ff" stroke-width="1.2"/>
<text x="16" y="906" font-size="8" fill="#30d030" font-family="Liberation Sans">Y</text>
<text x="41" y="924" font-size="8" fill="#f03030" font-family="Liberation Sans">X</text>
<text x="29" y="937" font-size="8" fill="#3070ff" font-family="Liberation Sans">Z</text>
</svg>
<div class="vpill" style="left:21px;top:256px;width:75px;text-align:left;padding-left:7px">Perspective</div>
<div class="vpill" style="left:100px;top:256px;width:104px">Default</div>
<div class="vpill" style="left:208px;top:256px;width:101px">Ray GL: Off</div>
<svg class="a" style="left:9px;top:259px" width="15" height="21" viewBox="0 0 16 21" preserveAspectRatio="none"><use href="#i-two"/></svg>
<svg class="a" style="left:1050px;top:255px" width="14" height="14"><use href="#i-move"/></svg>
<svg class="a" style="left:1070px;top:255px" width="14" height="14"><use href="#i-rot"/></svg>
<svg class="a" style="left:1090px;top:255px" width="15" height="14"><use href="#i-zoom"/></svg>
<svg class="a" style="left:1126px;top:256px" width="13" height="13"><use href="#i-gear"/></svg><!-- viewport info -->
<div class="t" style="right:779px;top:873px;color:#f5c030">No Items</div>
<div class="t" style="right:779px;top:888px;color:#dde2e6">Channels: 0</div>
<div class="t" style="right:779px;top:903px;color:#dde2e6">Deformers: ON</div>
<div class="t" style="right:779px;top:918px;color:#dde2e6">GL: 2,632,048</div>
<div class="t" style="right:779px;top:933px;color:#dde2e6">500 mm</div>
<!-- TIMELINE -->
<div class="a" style="left:0;top:950px;width:1154px;height:1px;background:#2c2c2c"></div>
<div class="a" style="left:0;top:951px;width:1154px;height:1px;background:#595959"></div>
<div class="a" style="left:5px;top:959px;width:1145px;height:25px;background:#959ca3;border-radius:7px 0 0 0"></div>
<div class="a" style="left:5px;top:959px;width:29px;height:25px;background:#8a9198;border-radius:7px 0 0 0"></div>
<div class="a" style="left:1121px;top:959px;width:29px;height:25px;background:#868d94"></div>
<div class="a" style="left:5px;top:984px;width:1145px;height:14px;background:#5e5e5e;border-radius:0 0 0 7px;border-top:1px solid #3c3c3c"></div>
<div class="a" style="left:1130px;top:985px;width:1px;height:13px;background:#3c3c3c"></div>
<svg class="a" style="left:9px;top:959px" width="15" height="40"><g fill="#7ec81e"><rect x="0" y="0" width="15" height="3"/><rect x="12" y="0" width="3" height="11"/><rect x="0" y="8" width="15" height="3"/><rect x="0" y="8" width="3" height="13"/><rect x="0" y="18" width="15" height="3"/><rect x="0" y="25" width="15" height="3"/><rect x="12" y="25" width="3" height="11"/><rect x="0" y="33" width="15" height="3"/><rect x="0" y="33" width="3" height="7"/></g></svg>
<svg class="a" style="left:34px;top:960px" width="1100" height="12"><rect x="0" y="0" width="1" height="9" fill="#fff"/><rect x="4" y="0" width="1" height="4" fill="#2a2a2a"/><rect x="9" y="0" width="1" height="4" fill="#2a2a2a"/><rect x="14" y="0" width="1" height="4" fill="#2a2a2a"/><rect x="19" y="0" width="1" height="4" fill="#2a2a2a"/><rect x="24" y="0" width="1" height="4" fill="#2a2a2a"/><rect x="28" y="0" width="1" height="4" fill="#2a2a2a"/><rect x="33" y="0" width="1" height="4" fill="#2a2a2a"/><rect x="38" y="0" width="1" height="4" fill="#2a2a2a"/><rect x="43" y="0" width="1" height="4" fill="#2a2a2a"/><rect x="48" y="0" width="1" height="4" fill="#2a2a2a"/><rect x="53" y="0" width="1" height="4" fill="#2a2a2a"/><rect x="57" y="0" width="1" height="9" fill="#2a2a2a"/><rect x="62" y="0" width="1" height="4" fill="#2a2a2a"/><rect x="67" y="0" width="1" height="4" fill="#2a2a2a"/><rect x="72" y="0" width="1" height="4" fill="#2a2a2a"/><rect x="77" y="0" width="1" height="4" fill="#2a2a2a"/><rect x="82" y="0" width="1" height="4" fill="#2a2a2a"/><rect x="86" y="0" width="1" height="4" fill="#2a2a2a"/><rect x="91" y="0" width="1" height="4" fill="#2a2a2a"/><rect x="96" y="0" width="1" height="4" fill="#2a2a2a"/><rect x="101" y="0" width="1" height="4" fill="#2a2a2a"/><rect x="106" y="0" width="1" height="4" fill="#2a2a2a"/><rect x="110" y="0" width="1" height="4" fill="#2a2a2a"/><rect x="115" y="0" width="1" height="9" fill="#2a2a2a"/><rect x="120" y="0" width="1" height="4" fill="#2a2a2a"/><rect x="125" y="0" width="1" height="4" fill="#2a2a2a"/><rect x="130" y="0" width="1" height="4" fill="#2a2a2a"/><rect x="135" y="0" width="1" height="4" fill="#2a2a2a"/><rect x="139" y="0" width="1" height="4" fill="#2a2a2a"/><rect x="144" y="0" width="1" height="4" fill="#2a2a2a"/><rect x="149" y="0" width="1" height="4" fill="#2a2a2a"/><rect x="154" y="0" width="1" height="4" fill="#2a2a2a"/><rect x="159" y="0" width="1" height="4" fill="#2a2a2a"/><rect x="164" y="0" width="1" height="4" fill="#2a2a2a"/><rect x="168" y="0" width="1" height="4" fill="#2a2a2a"/><rect x="173" y="0" width="1" height="9" fill="#2a2a2a"/><rect x="178" y="0" width="1" height="4" fill="#2a2a2a"/><rect x="183" y="0" width="1" height="4" fill="#2a2a2a"/><rect x="188" y="0" width="1" height="4" fill="#2a2a2a"/><rect x="193" y="0" width="1" height="4" fill="#2a2a2a"/><rect x="197" y="0" width="1" height="4" fill="#2a2a2a"/><rect x="202" y="0" width="1" height="4" fill="#2a2a2a"/><rect x="207" y="0" width="1" height="4" fill="#2a2a2a"/><rect x="212" y="0" width="1" height="4" fill="#2a2a2a"/><rect x="217" y="0" width="1" height="4" fill="#2a2a2a"/><rect x="221" y="0" width="1" height="4" fill="#2a2a2a"/><rect x="226" y="0" width="1" height="4" fill="#2a2a2a"/><rect x="231" y="0" width="1" height="9" fill="#2a2a2a"/><rect x="236" y="0" width="1" height="4" fill="#2a2a2a"/><rect x="241" y="0" width="1" height="4" fill="#2a2a2a"/><rect x="246" y="0" width="1" height="4" fill="#2a2a2a"/><rect x="250" y="0" width="1" height="4" fill="#2a2a2a"/><rect x="255" y="0" width="1" height="4" fill="#2a2a2a"/><rect x="260" y="0" width="1" height="4" fill="#2a2a2a"/><rect x="265" y="0" width="1" height="4" fill="#2a2a2a"/><rect x="270" y="0" width="1" height="4" fill="#2a2a2a"/><rect x="275" y="0" width="1" height="4" fill="#2a2a2a"/><rect x="279" y="0" width="1" height="4" fill="#2a2a2a"/><rect x="284" y="0" width="1" height="4" fill="#2a2a2a"/><rect x="289" y="0" width="1" height="9" fill="#2a2a2a"/><rect x="294" y="0" width="1" height="4" fill="#2a2a2a"/><rect x="299" y="0" width="1" height="4" fill="#2a2a2a"/><rect x="304" y="0" width="1" height="4" fill="#2a2a2a"/><rect x="308" y="0" width="1" height="4" fill="#2a2a2a"/><rect x="313" y="0" width="1" height="4" fill="#2a2a2a"/><rect x="318" y="0" width="1" height="4" fill="#2a2a2a"/><rect x="323" y="0" width="1" height="4" fill="#2a2a2a"/><rect x="328" y="0" width="1" height="4" fill="#2a2a2a"/><rect x="332" y="0" width="1" height="4" fill="#2a2a2a"/><rect x="337" y="0" width="1" height="4" fill="#2a2a2a"/><rect x="342" y="0" width="1" height="4" fill="#2a2a2a"/><rect x="347" y="0" width="1" height="9" fill="#2a2a2a"/><rect x="352" y="0" width="1" height="4" fill="#2a2a2a"/><rect x="357" y="0" width="1" height="4" fill="#2a2a2a"/><rect x="361" y="0" width="1" height="4" fill="#2a2a2a"/><rect x="366" y="0" width="1" height="4" fill="#2a2a2a"/><rect x="371" y="0" width="1" height="4" fill="#2a2a2a"/><rect x="376" y="0" width="1" height="4" fill="#2a2a2a"/><rect x="381" y="0" width="1" height="4" fill="#2a2a2a"/><rect x="386" y="0" width="1" height="4" fill="#2a2a2a"/><rect x="390" y="0" width="1" height="4" fill="#2a2a2a"/><rect x="395" y="0" width="1" height="4" fill="#2a2a2a"/><rect x="400" y="0" width="1" height="4" fill="#2a2a2a"/><rect x="405" y="0" width="1" height="9" fill="#2a2a2a"/><rect x="410" y="0" width="1" height="4" fill="#2a2a2a"/><rect x="415" y="0" width="1" height="4" fill="#2a2a2a"/><rect x="419" y="0" width="1" height="4" fill="#2a2a2a"/><rect x="424" y="0" width="1" height="4" fill="#2a2a2a"/><rect x="429" y="0" width="1" height="4" fill="#2a2a2a"/><rect x="434" y="0" width="1" height="4" fill="#2a2a2a"/><rect x="439" y="0" width="1" height="4" fill="#2a2a2a"/><rect x="443" y="0" width="1" height="4" fill="#2a2a2a"/><rect x="448" y="0" width="1" height="4" fill="#2a2a2a"/><rect x="453" y="0" width="1" height="4" fill="#2a2a2a"/><rect x="458" y="0" width="1" height="4" fill="#2a2a2a"/><rect x="463" y="0" width="1" height="9" fill="#2a2a2a"/><rect x="468" y="0" width="1" height="4" fill="#2a2a2a"/><rect x="472" y="0" width="1" height="4" fill="#2a2a2a"/><rect x="477" y="0" width="1" height="4" fill="#2a2a2a"/><rect x="482" y="0" width="1" height="4" fill="#2a2a2a"/><rect x="487" y="0" width="1" height="4" fill="#2a2a2a"/><rect x="492" y="0" width="1" height="4" fill="#2a2a2a"/><rect x="497" y="0" width="1" height="4" fill="#2a2a2a"/><rect x="501" y="0" width="1" height="4" fill="#2a2a2a"/><rect x="506" y="0" width="1" height="4" fill="#2a2a2a"/><rect x="511" y="0" width="1" height="4" fill="#2a2a2a"/><rect x="516" y="0" width="1" height="4" fill="#2a2a2a"/><rect x="521" y="0" width="1" height="9" fill="#2a2a2a"/><rect x="526" y="0" width="1" height="4" fill="#2a2a2a"/><rect x="530" y="0" width="1" height="4" fill="#2a2a2a"/><rect x="535" y="0" width="1" height="4" fill="#2a2a2a"/><rect x="540" y="0" width="1" height="4" fill="#2a2a2a"/><rect x="545" y="0" width="1" height="4" fill="#2a2a2a"/><rect x="550" y="0" width="1" height="4" fill="#2a2a2a"/><rect x="554" y="0" width="1" height="4" fill="#2a2a2a"/><rect x="559" y="0" width="1" height="4" fill="#2a2a2a"/><rect x="564" y="0" width="1" height="4" fill="#2a2a2a"/><rect x="569" y="0" width="1" height="4" fill="#2a2a2a"/><rect x="574" y="0" width="1" height="4" fill="#2a2a2a"/><rect x="579" y="0" width="1" height="9" fill="#2a2a2a"/><rect x="583" y="0" width="1" height="4" fill="#2a2a2a"/><rect x="588" y="0" width="1" height="4" fill="#2a2a2a"/><rect x="593" y="0" width="1" height="4" fill="#2a2a2a"/><rect x="598" y="0" width="1" height="4" fill="#2a2a2a"/><rect x="603" y="0" width="1" height="4" fill="#2a2a2a"/><rect x="608" y="0" width="1" height="4" fill="#2a2a2a"/><rect x="612" y="0" width="1" height="4" fill="#2a2a2a"/><rect x="617" y="0" width="1" height="4" fill="#2a2a2a"/><rect x="622" y="0" width="1" height="4" fill="#2a2a2a"/><rect x="627" y="0" width="1" height="4" fill="#2a2a2a"/><rect x="632" y="0" width="1" height="4" fill="#2a2a2a"/><rect x="637" y="0" width="1" height="9" fill="#2a2a2a"/><rect x="641" y="0" width="1" height="4" fill="#2a2a2a"/><rect x="646" y="0" width="1" height="4" fill="#2a2a2a"/><rect x="651" y="0" width="1" height="4" fill="#2a2a2a"/><rect x="656" y="0" width="1" height="4" fill="#2a2a2a"/><rect x="661" y="0" width="1" height="4" fill="#2a2a2a"/><rect x="665" y="0" width="1" height="4" fill="#2a2a2a"/><rect x="670" y="0" width="1" height="4" fill="#2a2a2a"/><rect x="675" y="0" width="1" height="4" fill="#2a2a2a"/><rect x="680" y="0" width="1" height="4" fill="#2a2a2a"/><rect x="685" y="0" width="1" height="4" fill="#2a2a2a"/><rect x="690" y="0" width="1" height="4" fill="#2a2a2a"/><rect x="694" y="0" width="1" height="9" fill="#2a2a2a"/><rect x="699" y="0" width="1" height="4" fill="#2a2a2a"/><rect x="704" y="0" width="1" height="4" fill="#2a2a2a"/><rect x="709" y="0" width="1" height="4" fill="#2a2a2a"/><rect x="714" y="0" width="1" height="4" fill="#2a2a2a"/><rect x="719" y="0" width="1" height="4" fill="#2a2a2a"/><rect x="723" y="0" width="1" height="4" fill="#2a2a2a"/><rect x="728" y="0" width="1" height="4" fill="#2a2a2a"/><rect x="733" y="0" width="1" height="4" fill="#2a2a2a"/><rect x="738" y="0" width="1" height="4" fill="#2a2a2a"/><rect x="743" y="0" width="1" height="4" fill="#2a2a2a"/><rect x="748" y="0" width="1" height="4" fill="#2a2a2a"/><rect x="752" y="0" width="1" height="9" fill="#2a2a2a"/><rect x="757" y="0" width="1" height="4" fill="#2a2a2a"/><rect x="762" y="0" width="1" height="4" fill="#2a2a2a"/><rect x="767" y="0" width="1" height="4" fill="#2a2a2a"/><rect x="772" y="0" width="1" height="4" fill="#2a2a2a"/><rect x="776" y="0" width="1" height="4" fill="#2a2a2a"/><rect x="781" y="0" width="1" height="4" fill="#2a2a2a"/><rect x="786" y="0" width="1" height="4" fill="#2a2a2a"/><rect x="791" y="0" width="1" height="4" fill="#2a2a2a"/><rect x="796" y="0" width="1" height="4" fill="#2a2a2a"/><rect x="801" y="0" width="1" height="4" fill="#2a2a2a"/><rect x="805" y="0" width="1" height="4" fill="#2a2a2a"/><rect x="810" y="0" width="1" height="9" fill="#2a2a2a"/><rect x="815" y="0" width="1" height="4" fill="#2a2a2a"/><rect x="820" y="0" width="1" height="4" fill="#2a2a2a"/><rect x="825" y="0" width="1" height="4" fill="#2a2a2a"/><rect x="830" y="0" width="1" height="4" fill="#2a2a2a"/><rect x="834" y="0" width="1" height="4" fill="#2a2a2a"/><rect x="839" y="0" width="1" height="4" fill="#2a2a2a"/><rect x="844" y="0" width="1" height="4" fill="#2a2a2a"/><rect x="849" y="0" width="1" height="4" fill="#2a2a2a"/><rect x="854" y="0" width="1" height="4" fill="#2a2a2a"/><rect x="859" y="0" width="1" height="4" fill="#2a2a2a"/><rect x="863" y="0" width="1" height="4" fill="#2a2a2a"/><rect x="868" y="0" width="1" height="9" fill="#2a2a2a"/><rect x="873" y="0" width="1" height="4" fill="#2a2a2a"/><rect x="878" y="0" width="1" height="4" fill="#2a2a2a"/><rect x="883" y="0" width="1" height="4" fill="#2a2a2a"/><rect x="887" y="0" width="1" height="4" fill="#2a2a2a"/><rect x="892" y="0" width="1" height="4" fill="#2a2a2a"/><rect x="897" y="0" width="1" height="4" fill="#2a2a2a"/><rect x="902" y="0" width="1" height="4" fill="#2a2a2a"/><rect x="907" y="0" width="1" height="4" fill="#2a2a2a"/><rect x="912" y="0" width="1" height="4" fill="#2a2a2a"/><rect x="916" y="0" width="1" height="4" fill="#2a2a2a"/><rect x="921" y="0" width="1" height="4" fill="#2a2a2a"/><rect x="926" y="0" width="1" height="9" fill="#2a2a2a"/><rect x="931" y="0" width="1" height="4" fill="#2a2a2a"/><rect x="936" y="0" width="1" height="4" fill="#2a2a2a"/><rect x="941" y="0" width="1" height="4" fill="#2a2a2a"/><rect x="945" y="0" width="1" height="4" fill="#2a2a2a"/><rect x="950" y="0" width="1" height="4" fill="#2a2a2a"/><rect x="955" y="0" width="1" height="4" fill="#2a2a2a"/><rect x="960" y="0" width="1" height="4" fill="#2a2a2a"/><rect x="965" y="0" width="1" height="4" fill="#2a2a2a"/><rect x="970" y="0" width="1" height="4" fill="#2a2a2a"/><rect x="974" y="0" width="1" height="4" fill="#2a2a2a"/><rect x="979" y="0" width="1" height="4" fill="#2a2a2a"/><rect x="984" y="0" width="1" height="9" fill="#2a2a2a"/><rect x="989" y="0" width="1" height="4" fill="#2a2a2a"/><rect x="994" y="0" width="1" height="4" fill="#2a2a2a"/><rect x="998" y="0" width="1" height="4" fill="#2a2a2a"/><rect x="1003" y="0" width="1" height="4" fill="#2a2a2a"/><rect x="1008" y="0" width="1" height="4" fill="#2a2a2a"/><rect x="1013" y="0" width="1" height="4" fill="#2a2a2a"/><rect x="1018" y="0" width="1" height="4" fill="#2a2a2a"/><rect x="1023" y="0" width="1" height="4" fill="#2a2a2a"/><rect x="1027" y="0" width="1" height="4" fill="#2a2a2a"/><rect x="1032" y="0" width="1" height="4" fill="#2a2a2a"/><rect x="1037" y="0" width="1" height="4" fill="#2a2a2a"/><rect x="1042" y="0" width="1" height="9" fill="#2a2a2a"/><rect x="1047" y="0" width="1" height="4" fill="#2a2a2a"/><rect x="1052" y="0" width="1" height="4" fill="#2a2a2a"/><rect x="1056" y="0" width="1" height="4" fill="#2a2a2a"/><rect x="1061" y="0" width="1" height="4" fill="#2a2a2a"/><rect x="1066" y="0" width="1" height="4" fill="#2a2a2a"/><rect x="1071" y="0" width="1" height="4" fill="#2a2a2a"/><rect x="1076" y="0" width="1" height="4" fill="#2a2a2a"/><rect x="1081" y="0" width="1" height="4" fill="#2a2a2a"/><rect x="1085" y="0" width="1" height="4" fill="#2a2a2a"/></svg>
<div class="t" style="left:13.5px;width:40px;text-align:center;top:971px;color:#fff">0</div>
<div class="t" style="left:71.4px;width:40px;text-align:center;top:971px;color:#222">12</div>
<div class="t" style="left:129.3px;width:40px;text-align:center;top:971px;color:#222">24</div>
<div class="t" style="left:187.2px;width:40px;text-align:center;top:971px;color:#222">36</div>
<div class="t" style="left:245.1px;width:40px;text-align:center;top:971px;color:#222">48</div>
<div class="t" style="left:303.1px;width:40px;text-align:center;top:971px;color:#222">60</div>
<div class="t" style="left:361.0px;width:40px;text-align:center;top:971px;color:#222">72</div>
<div class="t" style="left:418.9px;width:40px;text-align:center;top:971px;color:#222">84</div>
<div class="t" style="left:476.8px;width:40px;text-align:center;top:971px;color:#222">96</div>
<div class="t" style="left:534.7px;width:40px;text-align:center;top:971px;color:#222">108</div>
<div class="t" style="left:592.6px;width:40px;text-align:center;top:971px;color:#222">120</div>
<div class="t" style="left:650.5px;width:40px;text-align:center;top:971px;color:#222">132</div>
<div class="t" style="left:708.4px;width:40px;text-align:center;top:971px;color:#222">144</div>
<div class="t" style="left:766.4px;width:40px;text-align:center;top:971px;color:#222">156</div>
<div class="t" style="left:824.3px;width:40px;text-align:center;top:971px;color:#222">168</div>
<div class="t" style="left:882.2px;width:40px;text-align:center;top:971px;color:#222">180</div>
<div class="t" style="left:940.1px;width:40px;text-align:center;top:971px;color:#222">192</div>
<div class="t" style="left:998.0px;width:40px;text-align:center;top:971px;color:#222">204</div>
<div class="t" style="left:1055.9px;width:40px;text-align:center;top:971px;color:#222">216</div>
<div class="t" style="left:27px;top:986px;color:#222">0</div>
<div class="t" style="left:562px;width:30px;text-align:center;top:986px;color:#222">225</div>
<div class="t" style="left:1097px;width:30px;text-align:right;top:986px;color:#222">225</div>
<div class="a" style="left:0;top:1001px;width:1154px;height:1px;background:#2c2c2c"></div>
<div class="a" style="left:0;top:1002px;width:1154px;height:1px;background:#595959"></div>
<div class="a" style="left:0;top:1038px;width:1154px;height:2px;background:#303030"></div>
<div class="btn" style="left:49px;top:1008px;width:78px;height:23px"></div>
<svg class="a" style="left:52px;top:1012px" width="18" height="17"><path d="M6 3 L17 1 V12" stroke="#8898d8" stroke-width="2" fill="none"/><path d="M6 3 V14" stroke="#8898d8" stroke-width="2"/><ellipse cx="3.8" cy="14" rx="3.3" ry="2.5" fill="#8898d8"/><ellipse cx="14.8" cy="12" rx="3.3" ry="2.5" fill="#8898d8"/></svg>
<div class="t" style="left:72px;top:1015px">Audio</div>
<div class="btn" style="left:131px;top:1008px;width:90px;height:23px"></div>
<svg class="a" style="left:132px;top:1012px" width="20" height="16"><rect x="0.5" y="0.5" width="19" height="15" fill="#555" stroke="#ccc"/><path d="M1 3 Q10 12 19 3" stroke="#60c0ff" stroke-width="1.3" fill="none"/><path d="M1 7 Q10 15 19 7" stroke="#ff3030" stroke-width="1.3" fill="none"/><path d="M1 14 Q10 2 19 12" stroke="#60e040" stroke-width="1.3" fill="none"/></svg>
<div class="t" style="left:153px;top:1015px">Graph Editor</div>
<div class="btn" style="left:225px;top:1008px;width:122px;height:23px"></div>
<div class="t" style="left:259px;top:1015px">Animated</div>
<svg class="a" style="left:334px;top:1018px" width="8" height="5"><path d="M0 0H8L4 5Z" fill="#ddd"/></svg>
<div class="btn" style="left:350px;top:1008px;width:46px;height:23px"></div>
<div class="a" style="left:373px;top:1009px;width:1px;height:21px;background:#4a4a4a"></div>
<svg class="a" style="left:353px;top:1013px" width="40" height="14"><path d="M2 1 V13" stroke="#ddd" stroke-width="2"/><path d="M16 1 L5 7 L16 13Z" fill="none" stroke="#ddd" stroke-width="1.5"/><path d="M33 1 L24 7 L33 13Z" fill="none" stroke="#ddd" stroke-width="1.5"/><path d="M36 1 V13 M39 1 V13" stroke="#ddd" stroke-width="1.5"/></svg>
<div class="a" style="left:400px;top:1009px;width:73px;height:21px;background:#8d949b;border-radius:6px;border:1px solid #3a3a3a"></div>
<div class="a" style="left:458px;top:1010px;width:14px;height:19px;background:#7f868d;border-radius:0 5px 5px 0"></div>
<svg class="a" style="left:459px;top:1014px" width="12" height="11"><path d="M5 1 L1 5.5 L5 10Z M7 1 L11 5.5 L7 10Z" fill="#b8bec4"/></svg>
<div class="t" style="left:409px;top:1015px;color:#111">0</div>
<div class="btn" style="left:476px;top:1008px;width:46px;height:23px"></div>
<div class="a" style="left:499px;top:1009px;width:1px;height:21px;background:#4a4a4a"></div>
<svg class="a" style="left:479px;top:1013px" width="40" height="14"><path d="M2 1 V13 M5 1 V13" stroke="#ddd" stroke-width="1.5"/><path d="M8 1 L17 7 L8 13Z" fill="none" stroke="#ddd" stroke-width="1.5"/><path d="M25 1 L35 7 L25 13Z" fill="none" stroke="#ddd" stroke-width="1.5"/><path d="M38 1 V13" stroke="#ddd" stroke-width="2"/></svg>
<div class="btn" style="left:526px;top:1008px;width:78px;height:23px"></div>
<svg class="a" style="left:531px;top:1013px" width="14" height="14"><path d="M2 1 L12 7 L2 13Z" fill="none" stroke="#ddd" stroke-width="1.5"/></svg>
<div class="t" style="left:548px;top:1015px">Play</div>
<div class="btn" style="left:608px;top:1008px;width:124px;height:23px"></div>
<svg class="a" style="left:611px;top:1011px" width="18" height="18"><path d="M1 4 L8 1 L16 4 V13 L8 17 L1 13Z" fill="#8cd050"/><path d="M1 4 L8 7 L16 4 M8 7 V17" stroke="#c8f0a0" fill="none"/><rect x="9" y="9" width="7" height="8" fill="#eee"/><path d="M12.5 8 V14 M10 12 L12.5 15 L15 12" stroke="#30a030" stroke-width="1.5" fill="none"/></svg>
<div class="t" style="left:630px;top:1015px">Cache Deformers</div>
<div class="btn" style="left:736px;top:1008px;width:46px;height:23px"></div>
<div class="a" style="left:758px;top:1009px;width:1px;height:21px;background:#4a4a4a"></div>
<div class="btn" style="left:785px;top:1008px;width:46px;height:23px"></div>
<div class="a" style="left:807px;top:1009px;width:1px;height:21px;background:#4a4a4a"></div>
<div class="btn" style="left:834px;top:1008px;width:68px;height:23px"></div>
<div class="a" style="left:857px;top:1009px;width:1px;height:21px;background:#4a4a4a"></div>
<div class="a" style="left:879px;top:1009px;width:1px;height:21px;background:#4a4a4a"></div>
<div class="btn" style="left:906px;top:1008px;width:46px;height:23px"></div>
<div class="a" style="left:928px;top:1009px;width:1px;height:21px;background:#4a4a4a"></div>
<div class="btn" style="left:955px;top:1008px;width:68px;height:23px"></div>
<div class="a" style="left:977px;top:1009px;width:1px;height:21px;background:#4a4a4a"></div>
<div class="a" style="left:1000px;top:1009px;width:1px;height:21px;background:#4a4a4a"></div>
<div class="btn" style="left:1027px;top:1008px;width:78px;height:23px"></div>
<svg class="a" style="left:1031px;top:1013px" width="14" height="14"><use href="#i-gear"/></svg>
<div class="t" style="left:1049px;top:1015px">Settings</div>
<svg class="a" style="left:739px;top:1012px" width="40" height="16"><g stroke="#ccc" stroke-width="1.3" fill="none"><circle cx="8" cy="9" r="6"/><path d="M8 9 L3.5 12.5 M8 9 L12.5 12.5"/><circle cx="31" cy="9" r="6"/><path d="M31 9 L26.5 12.5 M31 9 L35.5 12.5"/></g><path d="M8 0 L11 4 H5Z" fill="#f0a080"/><path d="M8 3 V8" stroke="#f0a080" stroke-width="1.5"/><path d="M31 8 L34 4 H28Z" fill="#80d070"/><path d="M31 0 V5" stroke="#80d070" stroke-width="1.5"/></svg>
<svg class="a" style="left:788px;top:1013px" width="40" height="14"><path d="M2 1 V13" stroke="#ccc" stroke-width="1.5"/><path d="M17 2 L5 7 L17 12Z" fill="#888" stroke="#ddd"/><path d="M36 2 L24 7 L36 12Z" fill="#888" stroke="#ddd"/><path d="M22 1 V13" stroke="#ccc" stroke-width="1.5"/></svg>
<svg class="a" style="left:837px;top:1011px" width="64" height="18"><path d="M1 10 Q4 1 7 8 Q10 14 13 5" stroke="#e0c060" stroke-width="1.5" fill="none"/><circle cx="13" cy="13" r="4" fill="#e8a0a0"/><circle cx="31" cy="9" r="7" fill="#e0a8a8"/><path d="M46 3 H60 M48 3 V12 M58 3 V12" stroke="#aaa" stroke-width="1.2"/><circle cx="58" cy="13" r="4" fill="#e8a0a0"/></svg>
<svg class="a" style="left:909px;top:1013px" width="40" height="14"><path d="M1 2 L13 7 L1 12Z" fill="#888" stroke="#ddd"/><path d="M16 1 V13" stroke="#ccc" stroke-width="1.5"/><path d="M22 2 L34 7 L22 12Z" fill="#888" stroke="#ddd"/><path d="M37 1 V13" stroke="#ccc" stroke-width="1.5"/></svg>
<svg class="a" style="left:958px;top:1011px" width="64" height="18"><path d="M2 9 Q8 2 14 9 Q8 16 2 9Z" fill="#ddd"/><circle cx="8" cy="9" r="2.5" fill="#333"/><circle cx="13" cy="14" r="3" fill="#e8a0a0"/><path d="M30 4 A5 5 0 1 0 33 11" stroke="#ccc" stroke-width="1.3" fill="none"/><circle cx="35" cy="14" r="3.5" fill="#e8a0a0"/><rect x="49" y="3" width="8" height="8" fill="#bbb"/><circle cx="58" cy="14" r="3.5" fill="#e8a0a0"/></svg><!-- MIDDLE PANEL -->
<div class="a" style="left:1156px;top:101px;width:434px;height:939px;background:#474747"></div>
<div class="a" style="left:1156px;top:101px;width:1px;height:939px;background:#5a5a5a"></div>
<div class="a" style="left:1588px;top:101px;width:2px;height:939px;background:#2e2e2e"></div>
<div class="a" style="left:1160px;top:109px;width:6px;height:6px;border-radius:50%;background:#333"></div>
<div class="a" style="left:1170px;top:104px;width:407px;height:16px;background:#2e2e2e;border-radius:7px"></div>
<div class="t" style="left:1170px;width:407px;text-align:center;top:107px;color:#d8d8d8">Groups</div>
<svg class="a" style="left:1562px;top:106px" width="11" height="11"><use href="#i-max"/></svg>
<svg class="a" style="left:1580px;top:108px" width="5" height="8"><use href="#i-arr"/></svg>
<div class="dd" style="left:1160px;top:124px;width:78px;height:16px;background:#5c5c5c;border-color:#3a3a3a;padding-left:2px;line-height:14px">New Group</div>
<div class="list" style="left:1160px;top:143px;width:411px;height:186px;border-radius:6px 0 0 6px"></div>
<div class="hdr" style="left:1160px;top:143px;width:411px;height:18px;border-radius:6px 0 0 0;border-bottom:1px solid #55606a"></div>
<div class="a" style="left:1160px;top:162px;width:411px;height:31px;background:#989fa6"></div>
<div class="vl" style="left:1180px;top:143px;height:186px"></div>
<div class="a" style="left:1180px;top:143px;width:1px;height:18px;background:#505a64"></div>
<div class="vl" style="left:1201px;top:143px;height:186px"></div>
<div class="a" style="left:1201px;top:143px;width:1px;height:18px;background:#505a64"></div>
<div class="vl" style="left:1222px;top:143px;height:186px"></div>
<div class="a" style="left:1222px;top:143px;width:1px;height:18px;background:#505a64"></div>
<div class="vl" style="left:1243px;top:143px;height:186px"></div>
<div class="a" style="left:1243px;top:143px;width:1px;height:18px;background:#505a64"></div>
<div class="t" style="left:1258px;top:147px;color:#d4dae0">Name</div>
<svg class="a" style="left:1162px;top:146px" width="14" height="11"><use href="#i-eye"/></svg>
<svg class="a" style="left:1183px;top:145px" width="15" height="13"><rect x="1" y="4" width="9" height="7" fill="#eee"/><rect x="3" y="2" width="5" height="3" fill="#ddd"/><circle cx="9.5" cy="8" r="4.2" fill="#111"/><circle cx="9.5" cy="8" r="1.5" fill="#888"/></svg>
<svg class="a" style="left:1205px;top:145px" width="12" height="13"><path d="M6 1 L11 3.5 V9.5 L6 12 L1 9.5 V3.5Z M1 3.5 L6 6 L11 3.5 M6 6 V12" stroke="#333" fill="none"/></svg>
<svg class="a" style="left:1226px;top:145px" width="12" height="13"><path d="M6 1 L11 3.5 V9.5 L6 12 L1 9.5 V3.5Z" fill="#eee" stroke="#333"/><path d="M1 3.5 L6 6 L11 3.5 M6 6 V12" stroke="#333" fill="none"/></svg>
<svg class="a" style="left:1163px;top:171px" width="13" height="10" style="opacity:.5"><g opacity="0.45"><use href="#i-eye"/></g></svg>
<svg class="a" style="left:1183px;top:171px" width="15" height="13"><g opacity="0.5"><rect x="1" y="4" width="9" height="7" fill="#eee"/><rect x="3" y="2" width="5" height="3" fill="#ddd"/><circle cx="9.5" cy="8" r="4.2" fill="#444"/><circle cx="9.5" cy="8" r="1.5" fill="#999"/></g></svg>
<div class="a" style="left:1205px;top:172px;width:13px;height:11px;border:1px solid #333;border-radius:3px"></div>
<div class="a" style="left:1226px;top:172px;width:13px;height:11px;border:1px solid #333;border-radius:3px"></div>
<svg class="a" style="left:1257px;top:173px" width="9" height="9"><path d="M4.5 0 V9 M0 4.5 H9" stroke="#222" stroke-width="1"/></svg>
<svg class="a" style="left:1268px;top:163px" width="14" height="15"><path d="M2 1 H1 V14 H2 M12 1 H13 V14 H12" stroke="#e8e8e8" fill="none"/><path d="M7 2 L12 4.5 V10.5 L7 13 L2 10.5 V4.5Z" fill="#8ab0d8"/><path d="M2 4.5 L7 7 L12 4.5 M7 7 V13" stroke="#c8dcf0" fill="none"/></svg>
<div class="t" style="left:1284px;top:165px;font-size:12px;font-weight:bold;color:#000">Beer_Storage_Tank_System <span style="font-weight:normal;color:#6a7078;font-size:10.7px;letter-spacing:0.5px">(3) : Group</span></div>
<div class="t" style="left:1292px;top:180px;color:#e8eef2">1 Item</div>
<div class="a" style="left:1571px;top:143px;width:15px;height:186px;background:#5a5a5a;border-radius:0 6px 6px 0;border:1px solid #3e3e3e"></div>
<div class="a" style="left:1576px;top:234px;width:5px;height:5px;border-radius:50%;background:#6a6a6a;border:1px solid #444"></div>
<div class="a" style="left:1157px;top:333px;width:431px;height:20px;background:#2a2a2a"></div>
<div class="a" style="left:1160px;top:340px;width:6px;height:6px;border-radius:50%;background:#111"></div>
<div class="a" style="left:1173px;top:338px;width:53px;height:15px;background:#474747;border-radius:6px 6px 0 0"></div>
<div class="t" style="left:1173px;width:53px;text-align:center;top:341px;color:#f0a020">Item List</div>
<div class="ptab" style="left:1231px;top:338px;width:52px">Images</div>
<div class="ptab" style="left:1288px;top:338px;width:85px">Vertex Map List</div>
<div class="t" style="left:1377px;top:338px;color:#aaa;font-size:14px">+</div>
<svg class="a" style="left:1546px;top:338px" width="12" height="12"><use href="#i-max"/></svg>
<svg class="a" style="left:1562px;top:338px" width="12" height="12"><use href="#i-gear"/></svg>
<svg class="a" style="left:1580px;top:340px" width="5" height="9"><use href="#i-arr"/></svg>
<div class="dd" style="left:1160px;top:358px;width:191px;height:18px;text-align:center;padding-right:20px;line-height:16px">Add Item</div>
<div class="a" style="left:1332px;top:359px;width:1px;height:16px;background:#3a3a3a"></div>
<svg class="a" style="left:1338px;top:365px" width="8" height="5"><path d="M0 0H8L4 5Z" fill="#ddd"/></svg>
<div class="dd" style="left:1402px;top:358px;width:143px;height:18px;padding-left:3px;line-height:16px">Filter Items</div>
<div class="dd" style="left:1549px;top:358px;width:16px;height:18px;text-align:center;line-height:16px">S</div>
<div class="dd" style="left:1569px;top:358px;width:16px;height:18px;text-align:center;line-height:16px">F</div>
<div class="list" style="left:1160px;top:379px;width:411px;height:171px;border-radius:6px 0 0 0"></div>
<div class="hdr" style="left:1160px;top:379px;width:411px;height:18px;border-radius:6px 0 0 0;border-bottom:1px solid #55606a"></div>
<div class="vl" style="left:1184px;top:379px;height:171px"></div>
<div class="a" style="left:1184px;top:379px;width:1px;height:18px;background:#505a64"></div>
<div class="vl" style="left:1209px;top:379px;height:171px"></div>
<div class="a" style="left:1209px;top:379px;width:1px;height:18px;background:#505a64"></div>
<div class="vl" style="left:1234px;top:379px;height:171px"></div>
<div class="a" style="left:1234px;top:379px;width:1px;height:18px;background:#505a64"></div>
<div class="t" style="left:1249px;top:383px;color:#d4dae0">Name</div>
<svg class="a" style="left:1164px;top:382px" width="13" height="10"><use href="#i-eye"/></svg>
<svg class="a" style="left:1189px;top:381px" width="13" height="13"><path d="M6.5 1 V12 M1 6.5 H12" stroke="#fff" stroke-width="2"/><path d="M3 10 L10 3" stroke="#fff" stroke-width="1.5"/></svg>
<svg class="a" style="left:1215px;top:381px" width="13" height="12"><path d="M6.5 7 V1" stroke="#40c040" stroke-width="2"/><path d="M6.5 7 L12 10" stroke="#e04040" stroke-width="2"/><path d="M6.5 7 L1 10" stroke="#4080ff" stroke-width="2"/></svg>
<svg class="a" style="left:1164px;top:402px" width="13" height="10"><use href="#i-eye"/></svg>
<svg class="a" style="left:1164px;top:420px" width="13" height="10"><use href="#i-eye"/></svg>
<svg class="a" style="left:1164px;top:438px" width="13" height="10"><use href="#i-eye"/></svg>
<svg class="a" style="left:1239px;top:403px" width="8" height="7"><path d="M0 0H8L4 7Z" fill="#444"/></svg>
<svg class="a" style="left:1241px;top:410px" width="14" height="34"><path d="M1.5 0 V32 H11 M1.5 14 H11" stroke="#555" stroke-dasharray="1 1.5" fill="none"/><rect x="9" y="12.5" width="3" height="3" fill="#666"/></svg>
<svg class="a" style="left:1251px;top:437px" width="7" height="9"><path d="M0 0L7 4.5L0 9Z" fill="#444"/></svg>
<svg class="a" style="left:1258px;top:399px" width="16" height="15"><rect x="1" y="6" width="14" height="8" fill="#222"/><path d="M1 5 L14 1 L15 4 L2 8Z" fill="#eee" stroke="#222"/><path d="M4 4 L6 7 M8 3 L10 6 M12 2 L14 5" stroke="#222"/></svg>
<div class="t" style="left:1275px;top:400px;font-size:12px;font-weight:bold;color:#000">Beer_Storage_Tank_System_modo_base.lxo*</div>
<svg class="a" style="left:1270px;top:417px" width="14" height="14"><path d="M7 1 L13 3.5 V10 L7 13 L1 10 V3.5Z" fill="#8ab0d8"/><path d="M1 3.5 L7 6 L13 3.5 M7 6 V13" stroke="#c8dcf0" fill="none"/></svg>
<div class="t" style="left:1286px;top:419px;color:#6a7078">Mesh</div>
<svg class="a" style="left:1271px;top:435px" width="14" height="13"><path d="M1 2 H5 L6 3 H12 V12 H1Z" fill="#ddd" stroke="#555" stroke-width="0.8"/><path d="M3 6 H14 L12 12 H1Z" fill="#888"/></svg>
<div class="t" style="left:1286px;top:437px;color:#000">Beer_Storage_Tank_System <span style="color:#6a7078">(2)</span></div>
<div class="a" style="left:1571px;top:379px;width:15px;height:171px;background:#5a5a5a;border-radius:0 6px 0 0;border:1px solid #3e3e3e"></div>
<div class="a" style="left:1576px;top:461px;width:5px;height:5px;border-radius:50%;background:#6a6a6a;border:1px solid #444"></div>
<div class="a" style="left:1160px;top:550px;width:411px;height:14px;background:#5a5a5a;border-radius:0 0 6px 6px;border:1px solid #3e3e3e"></div>
<div class="a" style="left:1161px;top:551px;width:342px;height:12px;background:#646464;border-radius:0 0 6px 6px"></div>
<div class="a" style="left:1328px;top:554px;width:5px;height:5px;border-radius:50%;background:#6a6a6a;border:1px solid #444"></div>
<div class="a" style="left:1157px;top:569px;width:431px;height:20px;background:#2a2a2a"></div>
<div class="a" style="left:1160px;top:576px;width:6px;height:6px;border-radius:50%;background:#111"></div>
<div class="a" style="left:1173px;top:574px;width:51px;height:15px;background:#474747;border-radius:6px 6px 0 0"></div>
<div class="t" style="left:1173px;width:51px;text-align:center;top:577px;color:#f0a020">Shading</div>
<div class="ptab" style="left:1229px;top:574px;width:57px">Channels</div>
<div class="ptab" style="left:1291px;top:574px;width:88px">Info &amp; Statistics</div>
<div class="t" style="left:1383px;top:574px;color:#aaa;font-size:14px">+</div>
<svg class="a" style="left:1546px;top:574px" width="12" height="12"><use href="#i-max"/></svg>
<svg class="a" style="left:1562px;top:574px" width="12" height="12"><use href="#i-gear"/></svg>
<svg class="a" style="left:1580px;top:576px" width="5" height="9"><use href="#i-arr"/></svg>
<div class="t" style="left:1161px;top:598px;color:#d8d8d8">View</div>
<div class="dd" style="left:1188px;top:593px;width:173px;height:18px;padding-left:4px;line-height:16px">Shader Tree</div>
<svg class="a" style="left:1348px;top:599px" width="8" height="5"><path d="M0 0H8L4 5Z" fill="#ddd"/></svg>
<div class="dd" style="left:1365px;top:593px;width:200px;height:18px;padding-left:2px;line-height:16px">Assign Material</div>
<div class="dd" style="left:1569px;top:593px;width:16px;height:18px;text-align:center;line-height:16px">F</div>
<div class="t" style="left:1159px;top:619px;color:#d8d8d8">Filter</div>
<div class="dd" style="left:1188px;top:614px;width:173px;height:18px;padding-left:4px;line-height:16px">(none)</div>
<svg class="a" style="left:1348px;top:620px" width="8" height="5"><path d="M0 0H8L4 5Z" fill="#ddd"/></svg>
<div class="dd" style="left:1365px;top:614px;width:200px;height:18px;padding-left:4px;line-height:16px">Add Layer</div>
<svg class="a" style="left:1552px;top:620px" width="8" height="5"><path d="M0 0H8L4 5Z" fill="#ddd"/></svg>
<div class="dd" style="left:1569px;top:614px;width:16px;height:18px;text-align:center;line-height:16px">S</div>
<div class="list" style="left:1160px;top:635px;width:411px;height:400px;border-radius:6px 0 0 6px"></div>
<div class="hdr" style="left:1160px;top:635px;width:411px;height:18px;border-radius:6px 0 0 0;border-bottom:1px solid #55606a"></div>
<div class="vl" style="left:1184px;top:635px;height:400px"></div>
<div class="a" style="left:1184px;top:635px;width:1px;height:18px;background:#505a64"></div>
<div class="vl" style="left:1441px;top:635px;height:400px"></div>
<div class="a" style="left:1441px;top:635px;width:1px;height:18px;background:#505a64"></div>
<svg class="a" style="left:1164px;top:638px" width="13" height="10"><use href="#i-eye"/></svg>
<div class="t" style="left:1199px;top:639px;color:#d4dae0">Name</div>
<div class="t" style="left:1444px;top:639px;color:#d4dae0">Effect</div>
<div class="t" style="left:1226px;top:658px;color:#0a0a0a">Render</div>
<svg class="a" style="left:1208px;top:655px" width="14" height="14"><defs><radialGradient id="gr" cx=".35" cy=".3" r=".7"><stop offset="0" stop-color="#e0e0ff"/><stop offset=".5" stop-color="#6060e0"/><stop offset="1" stop-color="#202080"/></radialGradient></defs><circle cx="7" cy="7" r="6.5" fill="url(#gr)"/></svg>
<svg class="a" style="left:1164px;top:676px" width="13" height="10"><use href="#i-eye"/></svg>
<div class="t" style="left:1239px;top:676px;color:#0a0a0a">Alpha Output</div>
<div class="t" style="left:1443px;top:676px;color:#0a0a0a">Alpha</div>
<svg class="a" style="left:1560px;top:678px" width="8" height="5"><path d="M0 0H8L4 5Z" fill="#111"/></svg>
<svg class="a" style="left:1221px;top:674px" width="13" height="12"><rect x="0.5" y="0.5" width="12" height="11" fill="#f0f0f0" stroke="#888"/><rect x="2" y="2" width="9" height="8" fill="#d8a020"/><path d="M3 9 L6 3 L9 9Z" fill="#222"/></svg>
<svg class="a" style="left:1164px;top:694px" width="13" height="10"><use href="#i-eye"/></svg>
<div class="t" style="left:1239px;top:694px;color:#0a0a0a">Final Color Output</div>
<div class="t" style="left:1443px;top:694px;color:#0a0a0a">Final Color</div>
<svg class="a" style="left:1560px;top:696px" width="8" height="5"><path d="M0 0H8L4 5Z" fill="#111"/></svg>
<svg class="a" style="left:1221px;top:692px" width="13" height="12"><rect x="0.5" y="0.5" width="12" height="11" fill="#f0f0f0" stroke="#888"/><rect x="2" y="2" width="9" height="8" fill="#d8a020"/><path d="M3 9 L6 3 L9 9Z" fill="#222"/></svg>
<svg class="a" style="left:1164px;top:712px" width="13" height="10"><use href="#i-eye"/></svg>
<div class="t" style="left:1239px;top:712px;color:#0a0a0a">Beer_Storage_Tank_System <span style="color:#6a7078">(2) (Item)</span></div>
<div class="t" style="left:1443px;top:712px;color:#0a0a0a"></div>
<svg class="a" style="left:1560px;top:714px" width="8" height="5"><path d="M0 0H8L4 5Z" fill="#111"/></svg>
<svg class="a" style="left:1220px;top:709px" width="15" height="15"><circle cx="6" cy="6" r="5" fill="#40a060"/><circle cx="9.5" cy="9.5" r="5" fill="#d02020"/></svg>
<svg class="a" style="left:1164px;top:730px" width="13" height="10"><use href="#i-eye"/></svg>
<div class="t" style="left:1239px;top:730px;color:#0a0a0a">Base Shader</div>
<div class="t" style="left:1443px;top:730px;color:#0a0a0a">Full Shading</div>
<svg class="a" style="left:1560px;top:732px" width="8" height="5"><path d="M0 0H8L4 5Z" fill="#111"/></svg>
<svg class="a" style="left:1220px;top:727px" width="14" height="14"><defs><radialGradient id="gw" cx=".35" cy=".3" r=".7"><stop offset="0" stop-color="#fff"/><stop offset=".6" stop-color="#bbb"/><stop offset="1" stop-color="#555"/></radialGradient></defs><circle cx="7" cy="7" r="6.5" fill="url(#gw)"/></svg>
<svg class="a" style="left:1164px;top:748px" width="13" height="10"><use href="#i-eye"/></svg>
<div class="t" style="left:1239px;top:748px;color:#0a0a0a">Base Material</div>
<div class="t" style="left:1443px;top:748px;color:#0a0a0a">(all)</div>
<svg class="a" style="left:1560px;top:750px" width="8" height="5"><path d="M0 0H8L4 5Z" fill="#111"/></svg>
<svg class="a" style="left:1220px;top:745px" width="14" height="14"><defs><radialGradient id="gg" cx=".35" cy=".3" r=".7"><stop offset="0" stop-color="#d0f0d0"/><stop offset=".6" stop-color="#50a070"/><stop offset="1" stop-color="#205030"/></radialGradient></defs><circle cx="7" cy="7" r="6.5" fill="url(#gg)"/></svg>
<div class="t" style="left:1227px;top:766px;color:#0a0a0a">Library</div>
<svg class="a" style="left:1208px;top:764px" width="14" height="13"><path d="M1 2 H5 L6 3 H12 V12 H1Z" fill="#ddd" stroke="#555" stroke-width="0.8"/><path d="M3 6 H14 L12 12 H1Z" fill="#888"/></svg>
<div class="t" style="left:1227px;top:784px;color:#0a0a0a">Nodes</div>
<svg class="a" style="left:1208px;top:782px" width="14" height="13"><path d="M1 2 H5 L6 3 H12 V12 H1Z" fill="#ddd" stroke="#555" stroke-width="0.8"/><path d="M3 6 H14 L12 12 H1Z" fill="#888"/></svg>
<div class="t" style="left:1211px;top:802px;color:#0a0a0a">Lights</div>
<div class="t" style="left:1211px;top:820px;color:#0a0a0a">Environments</div>
<div class="t" style="left:1211px;top:838px;color:#0a0a0a">Bake Items</div>
<div class="t" style="left:1227px;top:856px;color:#0a0a0a">FX</div>
<svg class="a" style="left:1208px;top:853px" width="16" height="15"><rect x="1" y="6" width="14" height="8" fill="#222"/><path d="M1 5 L14 1 L15 4 L2 8Z" fill="#eee" stroke="#222"/><path d="M4 4 L6 7 M8 3 L10 6 M12 2 L14 5" stroke="#222"/></svg>
<svg class="a" style="left:1189px;top:658px" width="8" height="7"><path d="M0 0H8L4 7Z" fill="#444"/></svg>
<svg class="a" style="left:1191px;top:666px" width="20" height="90"><path d="M1.5 0 V86 H9 M1.5 14 H9 M1.5 32 H6 M1.5 50 H9 M1.5 68 H9" stroke="#555" stroke-dasharray="1 1.5" fill="none"/><rect x="8" y="12.5" width="3" height="3" fill="#666"/><rect x="8" y="48.5" width="3" height="3" fill="#666"/><rect x="8" y="66.5" width="3" height="3" fill="#666"/><rect x="8" y="84.5" width="3" height="3" fill="#666"/></svg>
<svg class="a" style="left:1201px;top:711px" width="7" height="9"><path d="M0 0L7 4.5L0 9Z" fill="#444"/></svg>
<svg class="a" style="left:1188px;top:819px" width="7" height="9"><path d="M0 0L7 4.5L0 9Z" fill="#444"/></svg>
<div class="a" style="left:1571px;top:635px;width:15px;height:400px;background:#5a5a5a;border-radius:0 6px 6px 0;border:1px solid #3e3e3e"></div>
<div class="a" style="left:1576px;top:832px;width:5px;height:5px;border-radius:50%;background:#6a6a6a;border:1px solid #444"></div><!-- RIGHT PANEL -->
<div class="a" style="left:1590px;top:101px;width:330px;height:939px;background:#474747"></div>
<div class="a" style="left:1590px;top:101px;width:1px;height:939px;background:#5a5a5a"></div>
<div class="t" style="right:212px;top:110px;color:#a0a0a0">Pass Groups</div>
<div class="dd" style="left:1712px;top:106px;width:202px;height:18px;background:#555;border-color:#3a3a3a"></div>
<div class="a" style="left:1835px;top:107px;width:1px;height:16px;background:#404040"></div>
<div class="t" style="left:1734px;top:110px;color:#8a8a8a">(none)</div>
<svg class="a" style="left:1822px;top:112px" width="8" height="5"><path d="M0 0H8L4 5Z" fill="#8a8a8a"/></svg>
<div class="t" style="left:1861px;top:110px;color:#e0e0e0">New</div>
<div class="t" style="right:212px;top:131px;color:#a0a0a0">Passes</div>
<div class="dd" style="left:1712px;top:127px;width:202px;height:18px;background:#555;border-color:#3a3a3a"></div>
<div class="a" style="left:1835px;top:128px;width:1px;height:16px;background:#404040"></div>
<div class="t" style="left:1734px;top:131px;color:#8a8a8a">(none)</div>
<svg class="a" style="left:1822px;top:133px" width="8" height="5"><path d="M0 0H8L4 5Z" fill="#8a8a8a"/></svg>
<div class="t" style="left:1861px;top:131px;color:#8a8a8a">New</div>
<div class="a" style="left:1599px;top:150px;width:316px;height:1px;background:#3a3a3a"></div>
<div class="a" style="left:1599px;top:151px;width:316px;height:1px;background:#555"></div>
<div class="btn" style="left:1596px;top:155px;width:105px;height:24px"></div>
<div class="btn" style="left:1704px;top:155px;width:210px;height:24px"></div>
<div class="a" style="left:1808px;top:156px;width:1px;height:22px;background:#4a4a4a"></div>
<svg class="a" style="left:1599px;top:159px" width="16" height="16"><circle cx="8" cy="8" r="6.5" stroke="#70e070" stroke-width="1.6" fill="none"/><path d="M8 4.5 V11.5 M4.5 8 H11.5" stroke="#70e070" stroke-width="1.8"/><path d="M13 1 L15 5 L11 5Z" fill="#70e070"/></svg>
<div class="t" style="left:1618px;top:163px">Auto Add</div>
<svg class="a" style="left:1707px;top:159px" width="16" height="16"><circle cx="8" cy="8" r="7.5" fill="#3a3a3a"/><path d="M5.5 3 H10.5 V8 H13 L8 13.5 L3 8 H5.5Z" fill="#80e060" stroke="#204010" stroke-width="0.6"/></svg>
<div class="t" style="left:1726px;top:163px">Apply</div>
<svg class="a" style="left:1812px;top:159px" width="16" height="16"><circle cx="8" cy="8" r="7.5" fill="#3a3a3a"/><path d="M4.5 4.5 L11.5 11.5 M11.5 4.5 L4.5 11.5" stroke="#f04040" stroke-width="2.4"/></svg>
<div class="t" style="left:1831px;top:163px">Discard</div>
<div class="a" style="left:1591px;top:184px;width:329px;height:20px;background:#2a2a2a"></div>
<div class="a" style="left:1595px;top:191px;width:6px;height:6px;border-radius:50%;background:#111"></div>
<div class="a" style="left:1608px;top:189px;width:60px;height:15px;background:#474747;border-radius:6px 6px 0 0"></div>
<div class="t" style="left:1608px;width:60px;text-align:center;top:192px;color:#f0a020">Properties</div>
<div class="t" style="left:1673px;top:189px;color:#aaa;font-size:14px">+</div>
<svg class="a" style="left:1876px;top:189px" width="12" height="12"><use href="#i-max"/></svg>
<svg class="a" style="left:1892px;top:189px" width="12" height="12"><use href="#i-gear"/></svg>
<svg class="a" style="left:1910px;top:191px" width="5" height="9"><use href="#i-arr"/></svg>
<div class="a" style="left:1591px;top:1004px;width:329px;height:1px;background:#333"></div>
<div class="a" style="left:1591px;top:1005px;width:329px;height:1px;background:#595959"></div>
<div class="t" style="left:1597px;top:1020px;color:#bbb">&gt;</div>
<div class="a" style="left:1610px;top:1014px;width:277px;height:20px;background:#91989f;border-radius:5px;border:1px solid #3a3a3a"></div>
<div class="t" style="left:1620px;top:1019px;color:#555">Command</div>
<div class="a" style="left:1890px;top:1012px;width:24px;height:23px;background:#555;border-radius:5px;border:1px solid #3a3a3a"></div>
<svg class="a" style="left:1894px;top:1016px" width="16" height="16"><circle cx="8" cy="8" r="6" stroke="#e06060" stroke-width="1.5" fill="none"/></svg></body></html>
